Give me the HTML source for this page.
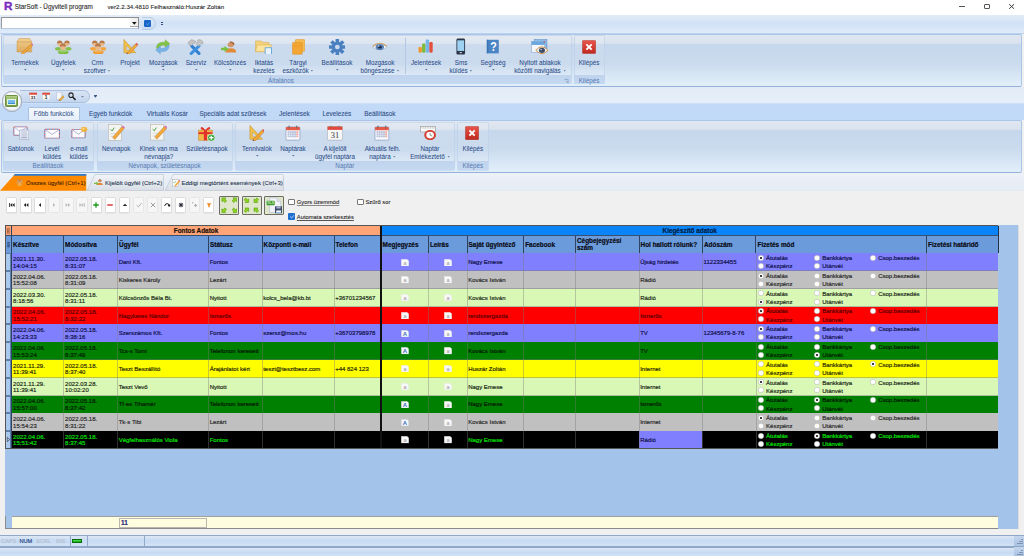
<!DOCTYPE html><html><head><meta charset="utf-8"><style>
*{margin:0;padding:0;box-sizing:border-box}
html,body{width:1024px;height:556px;overflow:hidden;background:#f0f0f0;font-family:"Liberation Sans",sans-serif;position:relative}
.t{position:absolute;white-space:nowrap;-webkit-text-stroke:0.18px currentColor}
.dd{display:inline-block;width:3px;height:2px;margin-left:2px;vertical-align:middle;position:relative;top:-0.6px}
table.g{position:absolute;border-collapse:collapse;table-layout:fixed}
table.g td{padding:0 0 0 1px;overflow:hidden;white-space:nowrap;font-size:6px;line-height:7.5px;vertical-align:middle}
</style></head><body>
<div style="position:absolute;left:0px;top:0px;width:1024px;height:15px;background:#fff"></div>
<div class="t" style="left:4.1px;top:0.4px;font-size:11.6px;line-height:12px;color:#7a2cc0;font-weight:bold;-webkit-text-stroke:0.45px #7a2cc0">R</div>
<div class="t" style="left:14.8px;top:3.0px;font-size:6.35px;line-height:8px;color:#2a2a2a;font-weight:normal;-webkit-text-stroke:0.1px currentColor">StarSoft - Ügyviteli program</div>
<div class="t" style="left:107.5px;top:3.0px;font-size:6.2px;line-height:8px;color:#2a2a2a;font-weight:normal;-webkit-text-stroke:0.1px currentColor">ver2.2.34.4810 Felhasználó:Huszár Zoltán</div>
<div style="position:absolute;left:959.3px;top:6.1px;width:5.7px;height:1px;background:#555"></div>
<div style="position:absolute;left:983.9px;top:3.7px;width:5.7px;height:5.4px;border:1px solid #555;border-radius:1px"></div>
<svg style="position:absolute;left:1008.9px;top:4.1px;overflow:visible" width="5.3" height="5" viewBox="0 0 5.3 5"><path d="M0.2 0.2L5.1 4.8M5.1 0.2L0.2 4.8" stroke="#3a3a3a" stroke-width="1"/></svg>
<div style="position:absolute;left:0px;top:15px;width:1024px;height:18.5px;background:linear-gradient(#e3ecf8,#d2e2f6 40%,#d7e6f8 70%,#e2edfa)"></div>
<div style="position:absolute;left:0px;top:32.5px;width:1024px;height:1px;background:#bad1ee"></div>
<div style="position:absolute;left:1px;top:17.3px;width:137.7px;height:12px;background:#fff;border-top:1px solid #8e8e8e;border-left:1px solid #9a9a9a;border-right:1px solid #8a8a8a;border-bottom:1px solid #b8c8de"></div>
<div style="position:absolute;left:129.8px;top:18.3px;width:8px;height:9.2px;background:linear-gradient(90deg,#f7f7f7,#ececec);border-bottom:1px solid #a8a8a8"></div>
<svg style="position:absolute;left:131.7px;top:22px;overflow:visible" width="4.6" height="3" viewBox="0 0 4.6 3"><path d="M0 0H4.6L2.3 2.7Z" fill="#111"/></svg>
<div style="position:absolute;left:141.5px;top:17px;width:14px;height:13.2px;border-radius:0 7px 7px 0;background:linear-gradient(#dce8f7,#c9dcf2);border:1px solid #b6cbe6;border-left:none"></div>
<div style="position:absolute;left:144px;top:19.9px;width:7px;height:7.1px;background:#1766c9;border-radius:1.2px"></div>
<svg style="position:absolute;left:145.5px;top:21.8px;overflow:visible" width="4" height="3.4" viewBox="0 0 4 3.4"><path d="M0.3 1.8L1.5 2.9L3.7 0.5" stroke="#8fb8ec" stroke-width="0.6" fill="none"/></svg>
<div style="position:absolute;left:160.7px;top:22px;width:2.4px;height:1px;background:#2c4a80"></div>
<div style="position:absolute;left:160.7px;top:24.1px;width:2.4px;height:1px;background:#2c4a80"></div>
<div style="position:absolute;left:1px;top:33.5px;width:1021px;height:53.3px;background:linear-gradient(#e0e7f0,#dae3ef 16%,#c6d7ec 19%,#cbdbee 55%,#e2effb);border:1px solid #a9c6ea;border-bottom:1.6px solid #93b3da;border-radius:2px"></div>
<div style="position:absolute;left:3px;top:35px;width:568.5px;height:49.2px;background:linear-gradient(rgba(255,255,255,0.15),rgba(255,255,255,0.0) 60%,rgba(255,255,255,0.2));border:1px solid rgba(185,207,233,0.6);border-radius:2px"></div>
<div style="position:absolute;left:3.5px;top:75.3px;width:567.5px;height:8.400000000000006px;background:linear-gradient(#bfd3ed,#c5d9f1)"></div>
<div class="t" style="left:281px;top:76.5px;font-size:6.3px;line-height:8px;color:#5679b0;font-weight:normal;transform:translateX(-50%);-webkit-text-stroke:0">Általános</div>
<div style="position:absolute;left:573.5px;top:35px;width:31.5px;height:49.2px;background:linear-gradient(rgba(255,255,255,0.15),rgba(255,255,255,0.0) 60%,rgba(255,255,255,0.2));border:1px solid rgba(185,207,233,0.6);border-radius:2px"></div>
<div style="position:absolute;left:574.0px;top:75.3px;width:30.5px;height:8.400000000000006px;background:linear-gradient(#bfd3ed,#c5d9f1)"></div>
<div class="t" style="left:589px;top:76.5px;font-size:6.3px;line-height:8px;color:#5679b0;font-weight:normal;transform:translateX(-50%);-webkit-text-stroke:0">Kilépés</div>
<div style="position:absolute;left:405px;top:38px;width:0.8px;height:36px;background:#b3c8e3"></div>
<svg style="position:absolute;left:564px;top:78.5px;overflow:visible" width="4.5" height="4.5" viewBox="0 0 4.5 4.5"><path d="M0.4 0.4H4.1V4.1" stroke="#7390b5" stroke-width="0.6" fill="none"/><path d="M1.8 1.8L4 4" stroke="#7390b5" stroke-width="0.6"/></svg>
<svg style="position:absolute;left:16.3px;top:38px" width="16.7" height="16" viewBox="0 0 16 16" preserveAspectRatio="none"><defs><linearGradient id="gbox" x1="0" y1="0" x2="0" y2="1"><stop offset="0" stop-color="#f1cf8f"/><stop offset="1" stop-color="#deaa5c"/></linearGradient></defs>
<path d="M1 3.5L3 0.5H13L15 3.5V14H1Z" fill="url(#gbox)" stroke="#c9964c" stroke-width="0.5"/><path d="M1 4H15" stroke="#c9964c" stroke-width="0.6"/>
<path d="M5 15.5L14.5 6L16 7.5L6.5 17Z" fill="#f4a93a" stroke="#a8691c" stroke-width="0.4"/><path d="M14.5 6L15.3 5.2L16.8 6.7L16 7.5Z" fill="#e06ab0"/></svg>
<div class="t" style="left:25px;top:58.8px;font-size:6.3px;line-height:8px;color:#2a4c88;font-weight:normal;transform:translateX(-50%);-webkit-text-stroke:0.05px currentColor">Termékek</div>
<svg style="position:absolute;left:23.7px;top:68.7px;overflow:visible" width="2.6" height="1.8" viewBox="0 0 2.6 1.8"><path d="M0 0H2.6L1.3 1.5Z" fill="#5a7098"/></svg>
<svg style="position:absolute;left:55px;top:39.5px" width="16.5" height="14.5" viewBox="0 0 16 16" preserveAspectRatio="none"><ellipse cx="3" cy="9.6" rx="3" ry="2" fill="#86c04a"/><ellipse cx="13" cy="9.6" rx="3" ry="2" fill="#86c04a"/><ellipse cx="4.6" cy="4.3999999999999995" rx="2.295" ry="2.5600000000000005" fill="#eab98a"/><path d="M1.8999999999999995 4.1Q1.8999999999999995 0.5999999999999996 4.6 0.5999999999999996Q7.3 0.5999999999999996 7.3 4.1Q4.6 2.6799999999999997 1.8999999999999995 4.1Z" fill="#b97a4c"/><ellipse cx="11.6" cy="4.3999999999999995" rx="2.295" ry="2.5600000000000005" fill="#eab98a"/><path d="M8.899999999999999 4.1Q8.899999999999999 0.5999999999999996 11.6 0.5999999999999996Q14.3 0.5999999999999996 14.3 4.1Q11.6 2.6799999999999997 8.899999999999999 4.1Z" fill="#b97a4c"/><ellipse cx="8" cy="13.6" rx="5.3" ry="2.4" fill="#7cba42"/><ellipse cx="8" cy="12.8" rx="4" ry="1.2" fill="#a8d870" opacity="0.6"/><ellipse cx="7.7" cy="8.0" rx="2.465" ry="3.12" fill="#eab98a"/><path d="M4.800000000000001 7.7Q4.800000000000001 3.5000000000000004 7.7 3.5000000000000004Q10.6 3.5000000000000004 10.6 7.7Q7.7 6.035 4.800000000000001 7.7Z" fill="#b97a4c"/></svg>
<div class="t" style="left:63.3px;top:58.8px;font-size:6.3px;line-height:8px;color:#2a4c88;font-weight:normal;transform:translateX(-50%);-webkit-text-stroke:0.05px currentColor">Ügyfelek</div>
<svg style="position:absolute;left:62.0px;top:68.7px;overflow:visible" width="2.6" height="1.8" viewBox="0 0 2.6 1.8"><path d="M0 0H2.6L1.3 1.5Z" fill="#5a7098"/></svg>
<svg style="position:absolute;left:89.6px;top:39.5px" width="16.60000000000001" height="14.5" viewBox="0 0 16 16" preserveAspectRatio="none"><ellipse cx="3" cy="9.6" rx="3" ry="2" fill="#f2a640"/><ellipse cx="13" cy="9.6" rx="3" ry="2" fill="#f2a640"/><ellipse cx="4.6" cy="4.3999999999999995" rx="2.295" ry="2.5600000000000005" fill="#eab98a"/><path d="M1.8999999999999995 4.1Q1.8999999999999995 0.5999999999999996 4.6 0.5999999999999996Q7.3 0.5999999999999996 7.3 4.1Q4.6 2.6799999999999997 1.8999999999999995 4.1Z" fill="#b97a4c"/><ellipse cx="11.6" cy="4.3999999999999995" rx="2.295" ry="2.5600000000000005" fill="#eab98a"/><path d="M8.899999999999999 4.1Q8.899999999999999 0.5999999999999996 11.6 0.5999999999999996Q14.3 0.5999999999999996 14.3 4.1Q11.6 2.6799999999999997 8.899999999999999 4.1Z" fill="#b97a4c"/><ellipse cx="8" cy="13.6" rx="5.3" ry="2.4" fill="#ee9a2c"/><ellipse cx="8" cy="12.8" rx="4" ry="1.2" fill="#f8c070" opacity="0.6"/><ellipse cx="7.7" cy="8.0" rx="2.465" ry="3.12" fill="#eab98a"/><path d="M4.800000000000001 7.7Q4.800000000000001 3.5000000000000004 7.7 3.5000000000000004Q10.6 3.5000000000000004 10.6 7.7Q7.7 6.035 4.800000000000001 7.7Z" fill="#b97a4c"/></svg>
<div class="t" style="left:97.4px;top:58.8px;font-size:6.3px;line-height:8px;color:#2a4c88;font-weight:normal;transform:translateX(-50%);-webkit-text-stroke:0.05px currentColor">Crm</div>
<div class="t" style="left:97.4px;top:66.8px;font-size:6.3px;line-height:8px;color:#2a4c88;font-weight:normal;transform:translateX(-50%);-webkit-text-stroke:0.05px currentColor">szoftver<svg class="dd" viewBox="0 0 3 2"><path d="M0.2 0.2H2.8L1.5 1.6Z" fill="#5a7098"/></svg></div>
<svg style="position:absolute;left:123.2px;top:39.4px" width="14.600000000000009" height="15.100000000000001" viewBox="0 0 16 16" preserveAspectRatio="none"><path d="M1 0.5L1 14.5L14 14.5Z" fill="#f2c24c" stroke="#c48e26" stroke-width="0.6"/><path d="M3.6 6.8L3.6 11.9L8.6 11.9Z" fill="#c8d8ee" stroke="#c48e26" stroke-width="0.4"/><path d="M3.8 15.6L13.6 5.2L15.6 7.2L5.8 17Z" fill="#f4a83a" stroke="#9a6018" stroke-width="0.4"/><path d="M3.8 15.6L4.6 14.8L5.8 17Z" fill="#444"/><path d="M13.6 5.2L14.8 4L16.8 6L15.6 7.2Z" fill="#e05a5a"/></svg>
<div class="t" style="left:130px;top:58.8px;font-size:6.3px;line-height:8px;color:#2a4c88;font-weight:normal;transform:translateX(-50%);-webkit-text-stroke:0.05px currentColor">Projekt</div>
<svg style="position:absolute;left:155.4px;top:38.9px" width="15.599999999999994" height="15.700000000000003" viewBox="0 0 16 16" preserveAspectRatio="none"><path d="M1.5 9.5Q1.5 3.5 8 3.2L10.5 3.2L10.5 0.8L15.2 4.8L10.5 8.8L10.5 6.3L8 6.3Q4.5 6.5 3.5 9.5Z" fill="#84c444" stroke="#5e9c2a" stroke-width="0.35"/><path d="M14.5 6.5Q14.5 12.5 8 12.8L5.5 12.8L5.5 15.2L0.8 11.2L5.5 7.2L5.5 9.7L8 9.7Q11.5 9.5 12.5 6.5Z" fill="#78b4e8" stroke="#4a88c4" stroke-width="0.35"/></svg>
<div class="t" style="left:163.4px;top:58.8px;font-size:6.3px;line-height:8px;color:#2a4c88;font-weight:normal;transform:translateX(-50%);-webkit-text-stroke:0.05px currentColor">Mozgások</div>
<svg style="position:absolute;left:162.1px;top:68.7px;overflow:visible" width="2.6" height="1.8" viewBox="0 0 2.6 1.8"><path d="M0 0H2.6L1.3 1.5Z" fill="#5a7098"/></svg>
<svg style="position:absolute;left:187px;top:38.5px" width="16.69999999999999" height="16.0" viewBox="0 0 16 16" preserveAspectRatio="none"><path d="M4.5 7L11.5 14.5" stroke="#2f7fd0" stroke-width="3" stroke-linecap="round"/><path d="M11.5 7L4 14.5" stroke="#3b8fe0" stroke-width="3" stroke-linecap="round"/><path d="M0.8 3.5L4.5 0.6L8.2 2.2L7.8 4.2L5.8 4L4.8 6.5L2.5 6.2Z" fill="#c4c4c4" stroke="#8a8a8a" stroke-width="0.4"/><path d="M10.5 0.8Q15.8 0.2 15.3 4.8L13 4.8L12.2 3.2L11.2 4.5L12.5 6.8Q9 7.5 9.2 4Z" fill="#c8c8c8" stroke="#8a8a8a" stroke-width="0.4"/></svg>
<div class="t" style="left:196px;top:58.8px;font-size:6.3px;line-height:8px;color:#2a4c88;font-weight:normal;transform:translateX(-50%);-webkit-text-stroke:0.05px currentColor">Szerviz</div>
<svg style="position:absolute;left:194.7px;top:68.7px;overflow:visible" width="2.6" height="1.8" viewBox="0 0 2.6 1.8"><path d="M0 0H2.6L1.3 1.5Z" fill="#5a7098"/></svg>
<svg style="position:absolute;left:221.2px;top:40.8px" width="15.700000000000017" height="12.200000000000003" viewBox="0 0 16 16" preserveAspectRatio="none"><circle cx="10" cy="5" r="3.2" fill="#d39565"/><path d="M9 1.5Q13 1 13 5" stroke="#9a5a30" stroke-width="1.5" fill="none"/>
<path d="M4.5 15Q4.5 9.5 10 9.5Q15.5 9.5 15.5 15Z" fill="#e28a3a"/><path d="M0 9H3.5V6.5L8 10.5L3.5 14.5V12H0Z" fill="#7cc043"/></svg>
<div class="t" style="left:230px;top:58.8px;font-size:6.3px;line-height:8px;color:#2a4c88;font-weight:normal;transform:translateX(-50%);-webkit-text-stroke:0.05px currentColor">Kölcsönzés</div>
<svg style="position:absolute;left:228.7px;top:68.7px;overflow:visible" width="2.6" height="1.8" viewBox="0 0 2.6 1.8"><path d="M0 0H2.6L1.3 1.5Z" fill="#5a7098"/></svg>
<svg style="position:absolute;left:255.4px;top:38.9px" width="17.099999999999994" height="15.600000000000001" viewBox="0 0 16 16" preserveAspectRatio="none"><path d="M0.5 2H6L7 3.5H13V13H0.5Z" fill="#f3d27a" stroke="#d4a84a" stroke-width="0.5"/><path d="M2 6H15.5L13.5 13H0.5Z" fill="#fbe39b" stroke="#d4a84a" stroke-width="0.5"/>
<rect x="9.5" y="9" width="6" height="7" fill="#e8f2fb" stroke="#5aa0d8" stroke-width="0.8"/></svg>
<div class="t" style="left:264px;top:58.8px;font-size:6.3px;line-height:8px;color:#2a4c88;font-weight:normal;transform:translateX(-50%);-webkit-text-stroke:0.05px currentColor">Iktatás</div>
<div class="t" style="left:264px;top:66.8px;font-size:6.3px;line-height:8px;color:#2a4c88;font-weight:normal;transform:translateX(-50%);-webkit-text-stroke:0.05px currentColor">kezelés</div>
<svg style="position:absolute;left:291.5px;top:38.9px" width="13.199999999999989" height="15.800000000000004" viewBox="0 0 16 16" preserveAspectRatio="none"><rect x="4" y="0.5" width="11.5" height="12" rx="1" fill="#f6bb50" stroke="#d99022" stroke-width="0.5"/><rect x="0.5" y="3.5" width="12" height="12" rx="1" fill="#f4a634" stroke="#d98a1c" stroke-width="0.5"/><path d="M0.5 7H12.5" stroke="#e29326" stroke-width="0.5"/></svg>
<div class="t" style="left:298px;top:58.8px;font-size:6.3px;line-height:8px;color:#2a4c88;font-weight:normal;transform:translateX(-50%);-webkit-text-stroke:0.05px currentColor">Tárgyi</div>
<div class="t" style="left:298px;top:66.8px;font-size:6.3px;line-height:8px;color:#2a4c88;font-weight:normal;transform:translateX(-50%);-webkit-text-stroke:0.05px currentColor">eszközök<svg class="dd" viewBox="0 0 3 2"><path d="M0.2 0.2H2.8L1.5 1.6Z" fill="#5a7098"/></svg></div>
<svg style="position:absolute;left:328.5px;top:38.9px" width="16.69999999999999" height="16.1" viewBox="0 0 16 16" preserveAspectRatio="none"><g fill="#4a7fc0"><circle cx="8" cy="8" r="5.2"/><rect x="6.3" y="0" width="3.4" height="3.8" transform="rotate(0 8 8)"/><rect x="6.3" y="0" width="3.4" height="3.8" transform="rotate(45 8 8)"/><rect x="6.3" y="0" width="3.4" height="3.8" transform="rotate(90 8 8)"/><rect x="6.3" y="0" width="3.4" height="3.8" transform="rotate(135 8 8)"/><rect x="6.3" y="0" width="3.4" height="3.8" transform="rotate(180 8 8)"/><rect x="6.3" y="0" width="3.4" height="3.8" transform="rotate(225 8 8)"/><rect x="6.3" y="0" width="3.4" height="3.8" transform="rotate(270 8 8)"/><rect x="6.3" y="0" width="3.4" height="3.8" transform="rotate(315 8 8)"/></g><circle cx="8" cy="8" r="2.3" fill="#c9d9ee"/></svg>
<div class="t" style="left:337px;top:58.8px;font-size:6.3px;line-height:8px;color:#2a4c88;font-weight:normal;transform:translateX(-50%);-webkit-text-stroke:0.05px currentColor">Beállítások</div>
<svg style="position:absolute;left:335.7px;top:68.7px;overflow:visible" width="2.6" height="1.8" viewBox="0 0 2.6 1.8"><path d="M0 0H2.6L1.3 1.5Z" fill="#5a7098"/></svg>
<svg style="position:absolute;left:372px;top:41.3px" width="15.600000000000023" height="11.300000000000004" viewBox="0 0 16 16" preserveAspectRatio="none"><path d="M0.5 8.5Q8 -0.5 15.5 8.5Q8 17 0.5 8.5Z" fill="#f4f7fb" stroke="#8a9bb8" stroke-width="0.5"/><path d="M1 7.2Q8 -1.2 15 7.2" stroke="#d99a4a" stroke-width="1.3" fill="none"/><circle cx="8" cy="8.5" r="4.4" fill="#5b83b8"/><circle cx="8" cy="8.5" r="2.2" fill="#1d2f50"/><circle cx="6.8" cy="7.2" r="0.9" fill="#fff"/></svg>
<div class="t" style="left:380px;top:58.8px;font-size:6.3px;line-height:8px;color:#2a4c88;font-weight:normal;transform:translateX(-50%);-webkit-text-stroke:0.05px currentColor">Mozgások</div>
<div class="t" style="left:380px;top:66.8px;font-size:6.3px;line-height:8px;color:#2a4c88;font-weight:normal;transform:translateX(-50%);-webkit-text-stroke:0.05px currentColor">böngészése<svg class="dd" viewBox="0 0 3 2"><path d="M0.2 0.2H2.8L1.5 1.6Z" fill="#5a7098"/></svg></div>
<svg style="position:absolute;left:417.8px;top:39.4px" width="15.199999999999989" height="14.100000000000001" viewBox="0 0 16 16" preserveAspectRatio="none"><rect x="0.5" y="9" width="3.6" height="6.5" rx="1.2" fill="#f0982e"/><rect x="4.3" y="5.2" width="3.6" height="10.3" rx="1.2" fill="#7cbc3a"/><rect x="8.1" y="0.5" width="3.6" height="15" rx="1.2" fill="#78b6ea"/><rect x="11.9" y="3.5" width="3.6" height="12" rx="1.2" fill="#e2503e"/></svg>
<div class="t" style="left:426px;top:58.8px;font-size:6.3px;line-height:8px;color:#2a4c88;font-weight:normal;transform:translateX(-50%);-webkit-text-stroke:0.05px currentColor">Jelentések</div>
<svg style="position:absolute;left:424.7px;top:68.7px;overflow:visible" width="2.6" height="1.8" viewBox="0 0 2.6 1.8"><path d="M0 0H2.6L1.3 1.5Z" fill="#5a7098"/></svg>
<svg style="position:absolute;left:454.7px;top:38px" width="11.5" height="17" viewBox="0 0 16 16" preserveAspectRatio="none"><rect x="2" y="0.5" width="12" height="15" rx="1.5" fill="#2a3448"/><rect x="3.2" y="2.2" width="9.6" height="10" fill="#9ed2f2"/><rect x="6.5" y="13.3" width="3" height="1" fill="#ddd"/></svg>
<div class="t" style="left:461px;top:58.8px;font-size:6.3px;line-height:8px;color:#2a4c88;font-weight:normal;transform:translateX(-50%);-webkit-text-stroke:0.05px currentColor">Sms</div>
<div class="t" style="left:461px;top:66.8px;font-size:6.3px;line-height:8px;color:#2a4c88;font-weight:normal;transform:translateX(-50%);-webkit-text-stroke:0.05px currentColor">küldés<svg class="dd" viewBox="0 0 3 2"><path d="M0.2 0.2H2.8L1.5 1.6Z" fill="#5a7098"/></svg></div>
<svg style="position:absolute;left:486.2px;top:38.9px" width="13.199999999999989" height="15.600000000000001" viewBox="0 0 16 16" preserveAspectRatio="none"><rect x="1" y="0.8" width="14.5" height="14" fill="#4a84c4"/><rect x="1" y="0.8" width="1.8" height="14" fill="#3a74b4"/><path d="M1.5 15.2H15.5" stroke="#9fc0e6" stroke-width="0.9"/><text x="9.2" y="12.5" font-family="Liberation Sans" font-weight="bold" font-size="13" fill="#fff" text-anchor="middle">?</text></svg>
<div class="t" style="left:493px;top:58.8px;font-size:6.3px;line-height:8px;color:#2a4c88;font-weight:normal;transform:translateX(-50%);-webkit-text-stroke:0.05px currentColor">Segítség</div>
<svg style="position:absolute;left:491.7px;top:68.7px;overflow:visible" width="2.6" height="1.8" viewBox="0 0 2.6 1.8"><path d="M0 0H2.6L1.3 1.5Z" fill="#5a7098"/></svg>
<svg style="position:absolute;left:531px;top:39.4px" width="17" height="15.100000000000001" viewBox="0 0 16 16" preserveAspectRatio="none"><rect x="3" y="0.5" width="12" height="10" fill="#8cbbe6" stroke="#5a88c0" stroke-width="0.5"/><rect x="0.5" y="2.5" width="12.5" height="11.5" fill="#f4f6fa" stroke="#7a9cc8" stroke-width="0.5"/><rect x="0.5" y="2.5" width="12.5" height="3.8" fill="#6aa6e0"/><circle cx="12.5" cy="3.2" r="0.7" fill="#e04040"/><path d="M4.5 12Q10.3 4.5 16 12Q10.3 19 4.5 12Z" fill="#eef1f6" stroke="#c98a3a" stroke-width="0.9"/><circle cx="10.3" cy="12" r="2.8" fill="#3c4c68"/><circle cx="9.5" cy="11.2" r="0.7" fill="#fff"/></svg>
<div class="t" style="left:540px;top:58.8px;font-size:6.3px;line-height:8px;color:#2a4c88;font-weight:normal;transform:translateX(-50%);-webkit-text-stroke:0.05px currentColor">Nyitott ablakok</div>
<div class="t" style="left:540px;top:66.8px;font-size:6.3px;line-height:8px;color:#2a4c88;font-weight:normal;transform:translateX(-50%);-webkit-text-stroke:0.05px currentColor">közötti navigálás<svg class="dd" viewBox="0 0 3 2"><path d="M0.2 0.2H2.8L1.5 1.6Z" fill="#5a7098"/></svg></div>
<svg style="position:absolute;left:582px;top:40px" width="14.100000000000023" height="14" viewBox="0 0 16 16" preserveAspectRatio="none"><defs><linearGradient id="gex" x1="0" y1="0" x2="0" y2="1"><stop offset="0" stop-color="#e8554a"/><stop offset="1" stop-color="#c0281e"/></linearGradient></defs><rect x="0.5" y="0.5" width="15" height="15" rx="1" fill="url(#gex)" stroke="#a8261c" stroke-width="0.5"/>
<path d="M5 5L11 11M11 5L5 11" stroke="#fff" stroke-width="2.2"/></svg>
<div class="t" style="left:589px;top:58.8px;font-size:6.3px;line-height:8px;color:#2a4c88;font-weight:normal;transform:translateX(-50%);-webkit-text-stroke:0.05px currentColor">Kilépés</div>
<div style="position:absolute;left:0px;top:86.8px;width:1024px;height:33.2px;background:linear-gradient(#e2ebf7 0px,#e6eef9 16px,#c2daf7 16.7px,#c0d9f7 33px)"></div>
<div style="position:absolute;left:19.5px;top:90px;width:70px;height:12.6px;border-radius:0 7px 7px 0;background:linear-gradient(#d8e4f4,#c4d6ee);border:1px solid #a9c0de;border-left:none"></div>
<div style="position:absolute;left:1.8px;top:91.2px;width:20.4px;height:20.4px;border-radius:50%;background:radial-gradient(circle at 50% 45%,#ffffff 0%,#f4f6f9 60%,#d0d6de 80%,#eef1f5 100%);border:0.8px solid #a4aebb;box-shadow:0 0 0.6px #8a96a8"></div>
<div style="position:absolute;left:4.9px;top:95px;width:13.3px;height:11.7px;background:linear-gradient(#b4d08c,#8cb45a 40%,#76a048);border-radius:1.2px;border:0.5px solid #6a9040"></div>
<div style="position:absolute;left:6.6px;top:99.2px;width:9.6px;height:5.6px;background:linear-gradient(#8cc8f4,#5aaae8 35%,#e8f4fc 50%,#5aaae8 65%,#2e7cc4);border:0.5px solid #e8f2e0"></div>
<svg style="position:absolute;left:28.8px;top:92.3px" width="8.3" height="8.2" viewBox="0 0 16 16" preserveAspectRatio="none"><rect x="0.5" y="1.5" width="15" height="14" rx="0.8" fill="#f8f8f8" stroke="#8a94b0" stroke-width="0.8"/><rect x="0.5" y="1.5" width="15" height="3.8" fill="#e0483c"/><text x="8" y="14" font-family="Liberation Sans" font-weight="bold" font-size="8.5" fill="#222" text-anchor="middle">31</text></svg>
<svg style="position:absolute;left:42px;top:92.3px" width="8.3" height="8.2" viewBox="0 0 16 16" preserveAspectRatio="none"><rect x="0.5" y="1.5" width="15" height="14" rx="0.8" fill="#f8f8f8" stroke="#9aa0a8" stroke-width="0.6"/><rect x="0.5" y="1.5" width="15" height="3.8" fill="#e0483c"/><text x="8" y="14" font-family="Liberation Sans" font-weight="bold" font-size="9" fill="#222" text-anchor="middle">1</text></svg>
<svg style="position:absolute;left:55.5px;top:92px" width="8.5" height="8.8" viewBox="0 0 16 16" preserveAspectRatio="none"><path d="M1 0.5H11V10L6 14H1Z" fill="#f4f6fa" stroke="#98a4c0" stroke-width="0.7"/><path d="M5 15L13 6.5L15.5 9L7.5 17Z" fill="#f0b040" stroke="#8a5a1a" stroke-width="0.5"/><path d="M5 15L6 14.5L7.5 17Z" fill="#333"/></svg>
<svg style="position:absolute;left:68px;top:92.3px" width="8" height="8.5" viewBox="0 0 16 16" preserveAspectRatio="none"><circle cx="6" cy="6" r="4.3" fill="none" stroke="#222" stroke-width="2"/><path d="M9 9L15 15" stroke="#222" stroke-width="3"/></svg>
<svg style="position:absolute;left:80.5px;top:96px;overflow:visible" width="3" height="2" viewBox="0 0 3 2"><path d="M0 0H3L1.5 1.7Z" fill="#7a8aa4"/></svg>
<div style="position:absolute;left:93.8px;top:94.8px;width:2.8px;height:0.7px;background:#3b5a8a"></div>
<svg style="position:absolute;left:93.8px;top:96.2px;overflow:visible" width="2.8" height="2" viewBox="0 0 2.8 2"><path d="M0 0H2.8L1.4 1.8Z" fill="#3b5a8a"/></svg>
<div style="position:absolute;left:27.8px;top:106.8px;width:52.5px;height:13.5px;background:linear-gradient(#f4f8fd,#e7eff9);border:1px solid #a9c2e2;border-bottom:none;border-radius:2px 2px 0 0"></div>
<div class="t" style="left:53.7px;top:109.6px;font-size:6.4px;line-height:8px;color:#33528a;font-weight:normal;transform:translateX(-50%);-webkit-text-stroke:0.05px currentColor">Főbb funkciók</div>
<div class="t" style="left:110.6px;top:109.6px;font-size:6.4px;line-height:8px;color:#2e4c86;font-weight:normal;transform:translateX(-50%);-webkit-text-stroke:0.08px currentColor">Egyéb funkciók</div>
<div class="t" style="left:167.3px;top:109.6px;font-size:6.4px;line-height:8px;color:#2e4c86;font-weight:normal;transform:translateX(-50%);-webkit-text-stroke:0.08px currentColor">Virtuális Kosár</div>
<div class="t" style="left:233px;top:109.6px;font-size:6.4px;line-height:8px;color:#2e4c86;font-weight:normal;transform:translateX(-50%);-webkit-text-stroke:0.08px currentColor">Speciális adat szűrések</div>
<div class="t" style="left:294.4px;top:109.6px;font-size:6.4px;line-height:8px;color:#2e4c86;font-weight:normal;transform:translateX(-50%);-webkit-text-stroke:0.08px currentColor">Jelentések</div>
<div class="t" style="left:336.8px;top:109.6px;font-size:6.4px;line-height:8px;color:#2e4c86;font-weight:normal;transform:translateX(-50%);-webkit-text-stroke:0.08px currentColor">Levelezés</div>
<div class="t" style="left:379.8px;top:109.6px;font-size:6.4px;line-height:8px;color:#2e4c86;font-weight:normal;transform:translateX(-50%);-webkit-text-stroke:0.08px currentColor">Beállítások</div>
<div style="position:absolute;left:1px;top:119.7px;width:1021px;height:53.39999999999999px;background:linear-gradient(#e0e7f0,#dae3ef 16%,#c6d7ec 19%,#cbdbee 55%,#e2effb);border:1px solid #a9c6ea;border-bottom:1.6px solid #93b3da;border-radius:2px"></div>
<div style="position:absolute;left:2.5px;top:121.5px;width:91.5px;height:49.099999999999994px;background:linear-gradient(rgba(255,255,255,0.15),rgba(255,255,255,0.0) 60%,rgba(255,255,255,0.2));border:1px solid rgba(185,207,233,0.6);border-radius:2px"></div>
<div style="position:absolute;left:3.0px;top:161.2px;width:90.5px;height:8.900000000000006px;background:linear-gradient(#bfd3ed,#c5d9f1)"></div>
<div class="t" style="left:48px;top:162.0px;font-size:6.3px;line-height:8px;color:#5679b0;font-weight:normal;transform:translateX(-50%);-webkit-text-stroke:0">Beállítások</div>
<div style="position:absolute;left:96.5px;top:121.5px;width:136.3px;height:49.099999999999994px;background:linear-gradient(rgba(255,255,255,0.15),rgba(255,255,255,0.0) 60%,rgba(255,255,255,0.2));border:1px solid rgba(185,207,233,0.6);border-radius:2px"></div>
<div style="position:absolute;left:97.0px;top:161.2px;width:135.3px;height:8.900000000000006px;background:linear-gradient(#bfd3ed,#c5d9f1)"></div>
<div class="t" style="left:164.6px;top:162.0px;font-size:6.3px;line-height:8px;color:#5679b0;font-weight:normal;transform:translateX(-50%);-webkit-text-stroke:0">Névnapok, születésnapok</div>
<div style="position:absolute;left:234.5px;top:121.5px;width:220.7px;height:49.099999999999994px;background:linear-gradient(rgba(255,255,255,0.15),rgba(255,255,255,0.0) 60%,rgba(255,255,255,0.2));border:1px solid rgba(185,207,233,0.6);border-radius:2px"></div>
<div style="position:absolute;left:235.0px;top:161.2px;width:219.7px;height:8.900000000000006px;background:linear-gradient(#bfd3ed,#c5d9f1)"></div>
<div class="t" style="left:344.8px;top:162.0px;font-size:6.3px;line-height:8px;color:#5679b0;font-weight:normal;transform:translateX(-50%);-webkit-text-stroke:0">Naptár</div>
<div style="position:absolute;left:457px;top:121.5px;width:31.69999999999999px;height:49.099999999999994px;background:linear-gradient(rgba(255,255,255,0.15),rgba(255,255,255,0.0) 60%,rgba(255,255,255,0.2));border:1px solid rgba(185,207,233,0.6);border-radius:2px"></div>
<div style="position:absolute;left:457.5px;top:161.2px;width:30.69999999999999px;height:8.900000000000006px;background:linear-gradient(#bfd3ed,#c5d9f1)"></div>
<div class="t" style="left:472.8px;top:162.0px;font-size:6.3px;line-height:8px;color:#5679b0;font-weight:normal;transform:translateX(-50%);-webkit-text-stroke:0">Kilépés</div>
<svg style="position:absolute;left:12.6px;top:126.4px" width="16.4" height="14.099999999999994" viewBox="0 0 16 16" preserveAspectRatio="none"><rect x="0.8" y="1" width="13" height="9.5" rx="0.5" fill="#fbfbfd" stroke="#d85a5a" stroke-width="1" stroke-dasharray="1.5 1.5"/><rect x="0.8" y="1" width="13" height="9.5" rx="0.5" fill="none" stroke="#5a7ec8" stroke-width="1" stroke-dasharray="1.5 1.5" stroke-dashoffset="1.5"/><path d="M1.5 1.5L7 6.5L13 1.5" stroke="#8a92b8" stroke-width="0.6" fill="none"/><rect x="6.5" y="4.5" width="9" height="11" rx="0.6" fill="#f0f2f8" stroke="#9aa6c8" stroke-width="0.8"/><rect x="8" y="6.3" width="6" height="1" fill="#a8b2cc"/><rect x="8" y="8.2" width="6" height="3" fill="#c8d0e2"/><rect x="8" y="12" width="6" height="2" fill="#a8b2cc"/></svg>
<div class="t" style="left:20.8px;top:144.8px;font-size:6.3px;line-height:8px;color:#2a4c88;font-weight:normal;transform:translateX(-50%);-webkit-text-stroke:0.05px currentColor">Sablonok</div>
<svg style="position:absolute;left:43.7px;top:126.5px" width="16.299999999999997" height="13.300000000000011" viewBox="0 0 16 16" preserveAspectRatio="none"><rect x="0.8" y="2.8" width="14.4" height="10.6" rx="0.6" fill="#fbfbfd" stroke="#d85a5a" stroke-width="1.1" stroke-dasharray="1.6 1.6"/><rect x="0.8" y="2.8" width="14.4" height="10.6" rx="0.6" fill="none" stroke="#5a7ec8" stroke-width="1.1" stroke-dasharray="1.6 1.6" stroke-dashoffset="1.6"/><path d="M1.5 3.5L8 9L14.5 3.5" stroke="#8a92b8" stroke-width="0.7" fill="none"/></svg>
<div class="t" style="left:52px;top:144.8px;font-size:6.3px;line-height:8px;color:#2a4c88;font-weight:normal;transform:translateX(-50%);-webkit-text-stroke:0.05px currentColor">Levél</div>
<div class="t" style="left:52px;top:152.8px;font-size:6.3px;line-height:8px;color:#2a4c88;font-weight:normal;transform:translateX(-50%);-webkit-text-stroke:0.05px currentColor">küldés</div>
<svg style="position:absolute;left:70.6px;top:125.9px" width="17.0" height="13.099999999999994" viewBox="0 0 16 16" preserveAspectRatio="none"><rect x="0.8" y="4.5" width="12.5" height="10" rx="0.6" fill="#fbfbfd" stroke="#d85a5a" stroke-width="1" stroke-dasharray="1.5 1.5"/><rect x="0.8" y="4.5" width="12.5" height="10" rx="0.6" fill="none" stroke="#5a7ec8" stroke-width="1" stroke-dasharray="1.5 1.5" stroke-dashoffset="1.5"/><path d="M1.5 5L7 10L12.5 5" stroke="#8a92b8" stroke-width="0.7" fill="none"/><g transform="translate(12.3 4.2)"><path d="M0 -4L1 -1.5L-1 -1.5Z" fill="#f0a830" transform="rotate(0)"/><path d="M0 -4L1 -1.5L-1 -1.5Z" fill="#f0a830" transform="rotate(45)"/><path d="M0 -4L1 -1.5L-1 -1.5Z" fill="#f0a830" transform="rotate(90)"/><path d="M0 -4L1 -1.5L-1 -1.5Z" fill="#f0a830" transform="rotate(135)"/><path d="M0 -4L1 -1.5L-1 -1.5Z" fill="#f0a830" transform="rotate(180)"/><path d="M0 -4L1 -1.5L-1 -1.5Z" fill="#f0a830" transform="rotate(225)"/><path d="M0 -4L1 -1.5L-1 -1.5Z" fill="#f0a830" transform="rotate(270)"/><path d="M0 -4L1 -1.5L-1 -1.5Z" fill="#f0a830" transform="rotate(315)"/><circle r="2.6" fill="#f2b23a"/><circle cx="-0.6" cy="-0.7" r="1.2" fill="#f8d890"/></g></svg>
<div class="t" style="left:78.8px;top:144.8px;font-size:6.3px;line-height:8px;color:#2a4c88;font-weight:normal;transform:translateX(-50%);-webkit-text-stroke:0.05px currentColor">e-mail</div>
<div class="t" style="left:78.8px;top:152.8px;font-size:6.3px;line-height:8px;color:#2a4c88;font-weight:normal;transform:translateX(-50%);-webkit-text-stroke:0.05px currentColor">küldés</div>
<svg style="position:absolute;left:108px;top:124px" width="16.5" height="17" viewBox="0 0 16 16" preserveAspectRatio="none"><rect x="0.5" y="0.5" width="12.5" height="15" fill="#f4f4f0" stroke="#b8b8b0" stroke-width="0.6"/><path d="M2.5 5L4 6.5L6 3.5" stroke="#3a9a3a" stroke-width="0.9" fill="none"/><path d="M2.5 9H8M2.5 11.5H8" stroke="#bbb" stroke-width="0.5"/>
<path d="M4.5 12.5L13.5 2.5L15.5 4.5L6.5 14.5Z" fill="#f4a93a" stroke="#a8691c" stroke-width="0.4"/><path d="M13.5 2.5L14.5 1.5L16.5 3.5L15.5 4.5Z" fill="#e06ab0"/></svg>
<div class="t" style="left:116.2px;top:144.8px;font-size:6.3px;line-height:8px;color:#2a4c88;font-weight:normal;transform:translateX(-50%);-webkit-text-stroke:0.05px currentColor">Névnapok</div>
<svg style="position:absolute;left:150.2px;top:124px" width="17.0" height="16.599999999999994" viewBox="0 0 16 16" preserveAspectRatio="none"><rect x="0.5" y="0.5" width="12.5" height="15" fill="#f4f4f0" stroke="#b8b8b0" stroke-width="0.6"/><path d="M2.5 5L4 6.5L6 3.5" stroke="#3a9a3a" stroke-width="0.9" fill="none"/><path d="M2.5 9H8M2.5 11.5H8" stroke="#bbb" stroke-width="0.5"/>
<path d="M4.5 12.5L13.5 2.5L15.5 4.5L6.5 14.5Z" fill="#f4a93a" stroke="#a8691c" stroke-width="0.4"/><path d="M13.5 2.5L14.5 1.5L16.5 3.5L15.5 4.5Z" fill="#e06ab0"/></svg>
<div class="t" style="left:158.8px;top:144.8px;font-size:6.3px;line-height:8px;color:#2a4c88;font-weight:normal;transform:translateX(-50%);-webkit-text-stroke:0.05px currentColor">Kinek van ma</div>
<div class="t" style="left:158.8px;top:152.8px;font-size:6.3px;line-height:8px;color:#2a4c88;font-weight:normal;transform:translateX(-50%);-webkit-text-stroke:0.05px currentColor">névnapja?</div>
<svg style="position:absolute;left:198.2px;top:124.7px" width="17.0" height="16.299999999999997" viewBox="0 0 16 16" preserveAspectRatio="none"><rect x="0.5" y="5" width="13" height="10" fill="#f2b84a" stroke="#c98a2a" stroke-width="0.5"/><rect x="5.5" y="5" width="3" height="10" fill="#e2342a"/><rect x="0.5" y="7" width="13" height="2" fill="#e2342a"/>
<path d="M7 5Q3 0 2.5 3.5Q3 5 7 5Q11 0 11.5 3.5Q11 5 7 5" fill="#e2342a"/><circle cx="12.5" cy="12.5" r="3.5" fill="#3aa53a" stroke="#fff" stroke-width="0.6"/><path d="M12.5 10.5V14.5M10.5 12.5H14.5" stroke="#fff" stroke-width="1.2"/></svg>
<div class="t" style="left:207px;top:144.8px;font-size:6.3px;line-height:8px;color:#2a4c88;font-weight:normal;transform:translateX(-50%);-webkit-text-stroke:0.05px currentColor">Születésnapok</div>
<svg style="position:absolute;left:249px;top:125.3px" width="15.300000000000011" height="15.700000000000003" viewBox="0 0 16 16" preserveAspectRatio="none"><path d="M1 0.5L1 14.5L14 14.5Z" fill="#f2c24c" stroke="#c48e26" stroke-width="0.6"/><path d="M3.6 6.8L3.6 11.9L8.6 11.9Z" fill="#c8d8ee" stroke="#c48e26" stroke-width="0.4"/><path d="M3.8 15.6L13.6 5.2L15.6 7.2L5.8 17Z" fill="#f4a83a" stroke="#9a6018" stroke-width="0.4"/><path d="M3.8 15.6L4.6 14.8L5.8 17Z" fill="#444"/><path d="M13.6 5.2L14.8 4L16.8 6L15.6 7.2Z" fill="#e05a5a"/></svg>
<div class="t" style="left:257px;top:144.8px;font-size:6.3px;line-height:8px;color:#2a4c88;font-weight:normal;transform:translateX(-50%);-webkit-text-stroke:0.05px currentColor">Tennivalók</div>
<svg style="position:absolute;left:255.7px;top:154.70000000000002px;overflow:visible" width="2.6" height="1.8" viewBox="0 0 2.6 1.8"><path d="M0 0H2.6L1.3 1.5Z" fill="#5a7098"/></svg>
<svg style="position:absolute;left:284.8px;top:125.3px" width="15.899999999999977" height="15.600000000000009" viewBox="0 0 16 16" preserveAspectRatio="none"><rect x="1" y="2" width="14" height="13.5" rx="0.8" fill="#fafbfd" stroke="#8a98c0" stroke-width="0.7"/><rect x="1" y="2" width="14" height="3.4" rx="0.8" fill="#e65a48"/><rect x="3.6" y="0.6" width="1" height="3" fill="#666"/><rect x="11.4" y="0.6" width="1" height="3" fill="#666"/><rect x="2.60" y="6.30" width="1.9" height="1.9" fill="#b8c2dc"/><rect x="2.60" y="8.50" width="1.9" height="1.9" fill="#b8c2dc"/><rect x="2.60" y="10.70" width="1.9" height="1.9" fill="#b8c2dc"/><rect x="4.80" y="6.30" width="1.9" height="1.9" fill="#b8c2dc"/><rect x="4.80" y="8.50" width="1.9" height="1.9" fill="#b8c2dc"/><rect x="4.80" y="10.70" width="1.9" height="1.9" fill="#b8c2dc"/><rect x="7.00" y="6.30" width="1.9" height="1.9" fill="#b8c2dc"/><rect x="7.00" y="8.50" width="1.9" height="1.9" fill="#b8c2dc"/><rect x="7.00" y="10.70" width="1.9" height="1.9" fill="#b8c2dc"/><rect x="9.20" y="6.30" width="1.9" height="1.9" fill="#b8c2dc"/><rect x="9.20" y="8.50" width="1.9" height="1.9" fill="#b8c2dc"/><rect x="9.20" y="10.70" width="1.9" height="1.9" fill="#b8c2dc"/><rect x="11.40" y="6.30" width="1.9" height="1.9" fill="#f0a8a0"/><rect x="11.40" y="8.50" width="1.9" height="1.9" fill="#f0a8a0"/><rect x="11.40" y="10.70" width="1.9" height="1.9" fill="#f0a8a0"/></svg>
<div class="t" style="left:293px;top:144.8px;font-size:6.3px;line-height:8px;color:#2a4c88;font-weight:normal;transform:translateX(-50%);-webkit-text-stroke:0.05px currentColor">Naptárak</div>
<svg style="position:absolute;left:291.7px;top:154.70000000000002px;overflow:visible" width="2.6" height="1.8" viewBox="0 0 2.6 1.8"><path d="M0 0H2.6L1.3 1.5Z" fill="#5a7098"/></svg>
<svg style="position:absolute;left:327px;top:125.3px" width="15.899999999999977" height="15.600000000000009" viewBox="0 0 16 16" preserveAspectRatio="none"><rect x="0.5" y="1.5" width="15" height="14" rx="0.8" fill="#f8f8f8" stroke="#9aa0a8" stroke-width="0.5"/><rect x="0.5" y="1.5" width="15" height="3.5" fill="#e0483c"/><circle cx="4" cy="1.5" r="0.8" fill="#777"/><circle cx="12" cy="1.5" r="0.8" fill="#777"/>
<text x="8" y="13.5" font-family="Liberation Serif" font-size="8.5" fill="#333" text-anchor="middle">31</text></svg>
<div class="t" style="left:335px;top:144.8px;font-size:6.3px;line-height:8px;color:#2a4c88;font-weight:normal;transform:translateX(-50%);-webkit-text-stroke:0.05px currentColor">A kijelölt</div>
<div class="t" style="left:335px;top:152.8px;font-size:6.3px;line-height:8px;color:#2a4c88;font-weight:normal;transform:translateX(-50%);-webkit-text-stroke:0.05px currentColor">ügyfél naptára</div>
<svg style="position:absolute;left:374.4px;top:125.3px" width="15.800000000000011" height="15.600000000000009" viewBox="0 0 16 16" preserveAspectRatio="none"><rect x="1" y="2" width="14" height="13.5" rx="0.8" fill="#fafbfd" stroke="#8a98c0" stroke-width="0.7"/><rect x="1" y="2" width="14" height="3.4" rx="0.8" fill="#e65a48"/><rect x="3.6" y="0.6" width="1" height="3" fill="#666"/><rect x="11.4" y="0.6" width="1" height="3" fill="#666"/><rect x="2.60" y="6.30" width="1.9" height="1.9" fill="#b8c2dc"/><rect x="2.60" y="8.50" width="1.9" height="1.9" fill="#b8c2dc"/><rect x="2.60" y="10.70" width="1.9" height="1.9" fill="#b8c2dc"/><rect x="4.80" y="6.30" width="1.9" height="1.9" fill="#b8c2dc"/><rect x="4.80" y="8.50" width="1.9" height="1.9" fill="#b8c2dc"/><rect x="4.80" y="10.70" width="1.9" height="1.9" fill="#b8c2dc"/><rect x="7.00" y="6.30" width="1.9" height="1.9" fill="#b8c2dc"/><rect x="7.00" y="8.50" width="1.9" height="1.9" fill="#b8c2dc"/><rect x="7.00" y="10.70" width="1.9" height="1.9" fill="#b8c2dc"/><rect x="9.20" y="6.30" width="1.9" height="1.9" fill="#b8c2dc"/><rect x="9.20" y="8.50" width="1.9" height="1.9" fill="#b8c2dc"/><rect x="9.20" y="10.70" width="1.9" height="1.9" fill="#b8c2dc"/><rect x="11.40" y="6.30" width="1.9" height="1.9" fill="#f0a8a0"/><rect x="11.40" y="8.50" width="1.9" height="1.9" fill="#f0a8a0"/><rect x="11.40" y="10.70" width="1.9" height="1.9" fill="#f0a8a0"/></svg>
<div class="t" style="left:382.5px;top:144.8px;font-size:6.3px;line-height:8px;color:#2a4c88;font-weight:normal;transform:translateX(-50%);-webkit-text-stroke:0.05px currentColor">Aktuális felh.</div>
<div class="t" style="left:382.5px;top:152.8px;font-size:6.3px;line-height:8px;color:#2a4c88;font-weight:normal;transform:translateX(-50%);-webkit-text-stroke:0.05px currentColor">naptára<svg class="dd" viewBox="0 0 3 2"><path d="M0.2 0.2H2.8L1.5 1.6Z" fill="#5a7098"/></svg></div>
<svg style="position:absolute;left:420px;top:125.9px" width="17" height="14.599999999999994" viewBox="0 0 16 16" preserveAspectRatio="none"><rect x="0.5" y="0.5" width="14" height="6" fill="#fafafa" stroke="#888" stroke-width="0.5"/><path d="M2.0 0.5V3" stroke="#666" stroke-width="0.3"/><path d="M3.6 0.5V3" stroke="#666" stroke-width="0.3"/><path d="M5.2 0.5V3" stroke="#666" stroke-width="0.3"/><path d="M6.800000000000001 0.5V3" stroke="#666" stroke-width="0.3"/><path d="M8.4 0.5V3" stroke="#666" stroke-width="0.3"/><path d="M10.0 0.5V3" stroke="#666" stroke-width="0.3"/><path d="M11.600000000000001 0.5V3" stroke="#666" stroke-width="0.3"/><path d="M13.200000000000001 0.5V3" stroke="#666" stroke-width="0.3"/>
<circle cx="9.5" cy="10" r="5.5" fill="#d43c30"/><circle cx="9.5" cy="10" r="3.6" fill="#fff"/><path d="M9.5 10V7.5M9.5 10L11.5 11" stroke="#444" stroke-width="0.6"/></svg>
<div class="t" style="left:430px;top:144.8px;font-size:6.3px;line-height:8px;color:#2a4c88;font-weight:normal;transform:translateX(-50%);-webkit-text-stroke:0.05px currentColor">Naptár</div>
<div class="t" style="left:430px;top:152.8px;font-size:6.3px;line-height:8px;color:#2a4c88;font-weight:normal;transform:translateX(-50%);-webkit-text-stroke:0.05px currentColor">Emlékeztető<svg class="dd" viewBox="0 0 3 2"><path d="M0.2 0.2H2.8L1.5 1.6Z" fill="#5a7098"/></svg></div>
<svg style="position:absolute;left:465.2px;top:125.9px" width="14.100000000000023" height="14.099999999999994" viewBox="0 0 16 16" preserveAspectRatio="none"><defs><linearGradient id="gex" x1="0" y1="0" x2="0" y2="1"><stop offset="0" stop-color="#e8554a"/><stop offset="1" stop-color="#c0281e"/></linearGradient></defs><rect x="0.5" y="0.5" width="15" height="15" rx="1" fill="url(#gex)" stroke="#a8261c" stroke-width="0.5"/>
<path d="M5 5L11 11M11 5L5 11" stroke="#fff" stroke-width="2.2"/></svg>
<div class="t" style="left:472.8px;top:144.8px;font-size:6.3px;line-height:8px;color:#2a4c88;font-weight:normal;transform:translateX(-50%);-webkit-text-stroke:0.05px currentColor">Kilépés</div>
<div style="position:absolute;left:0px;top:173.1px;width:1024px;height:17.6px;background:linear-gradient(#edf2f9,#e4eaf3)"></div>
<svg style="position:absolute;left:165px;top:174px;overflow:visible" width="125" height="16.7" viewBox="0 0 125 16.7"><defs><linearGradient id="tg" x1="0" y1="0" x2="0" y2="1"><stop offset="0" stop-color="#f1f4f8"/><stop offset="1" stop-color="#d9dee6"/></linearGradient></defs><path d="M0 16.7L8 0.5H117.5Q118.5 0.5 118.5 1.5V16.7Z" fill="url(#tg)" stroke="#b7bfca" stroke-width="0.6"/></svg>
<svg style="position:absolute;left:87px;top:174px;overflow:visible" width="77" height="16.7" viewBox="0 0 77 16.7"><path d="M0 16.7L8 0.5H76.5V16.7Z" fill="url(#tg)" stroke="#b7bfca" stroke-width="0.6"/></svg>
<svg style="position:absolute;left:0px;top:174px;overflow:visible" width="86.3" height="16.7" viewBox="0 0 86.3 16.7"><path d="M0 16.7L15 0H86.3V16.7Z" fill="#ff8a00"/><path d="M15 0H86.3V1.8H13.4Z" fill="#2b7bd0"/></svg>
<div class="t" style="left:26px;top:179.0px;font-size:6.0px;line-height:8px;color:#3a2000;font-weight:normal;-webkit-text-stroke:0.08px currentColor">Összes ügyfél (Ctrl+1)</div>
<svg style="position:absolute;left:16.2px;top:178.9px" width="7.4" height="7.1" viewBox="0 0 16 16" preserveAspectRatio="none"><ellipse cx="3" cy="9.6" rx="3" ry="2" fill="#e09838"/><ellipse cx="13" cy="9.6" rx="3" ry="2" fill="#e09838"/><ellipse cx="4.6" cy="4.3999999999999995" rx="2.295" ry="2.5600000000000005" fill="#eab98a"/><path d="M1.8999999999999995 4.1Q1.8999999999999995 0.5999999999999996 4.6 0.5999999999999996Q7.3 0.5999999999999996 7.3 4.1Q4.6 2.6799999999999997 1.8999999999999995 4.1Z" fill="#b97a4c"/><ellipse cx="11.6" cy="4.3999999999999995" rx="2.295" ry="2.5600000000000005" fill="#eab98a"/><path d="M8.899999999999999 4.1Q8.899999999999999 0.5999999999999996 11.6 0.5999999999999996Q14.3 0.5999999999999996 14.3 4.1Q11.6 2.6799999999999997 8.899999999999999 4.1Z" fill="#b97a4c"/><ellipse cx="8" cy="13.6" rx="5.3" ry="2.4" fill="#eaa440"/><ellipse cx="8" cy="12.8" rx="4" ry="1.2" fill="#f4c878" opacity="0.6"/><ellipse cx="7.7" cy="8.0" rx="2.465" ry="3.12" fill="#eab98a"/><path d="M4.800000000000001 7.7Q4.800000000000001 3.5000000000000004 7.7 3.5000000000000004Q10.6 3.5000000000000004 10.6 7.7Q7.7 6.035 4.800000000000001 7.7Z" fill="#b97a4c"/></svg>
<div class="t" style="left:105px;top:179.0px;font-size:6.0px;line-height:8px;color:#20304a;font-weight:normal;-webkit-text-stroke:0.08px currentColor">Kijelölt ügyfél (Ctrl+2)</div>
<svg style="position:absolute;left:94.2px;top:178.9px" width="9.1" height="6.5" viewBox="0 0 16 16" preserveAspectRatio="none"><circle cx="10" cy="5" r="3.2" fill="#d39565"/><path d="M9 1.5Q13 1 13 5" stroke="#9a5a30" stroke-width="1.5" fill="none"/>
<path d="M4.5 15Q4.5 9.5 10 9.5Q15.5 9.5 15.5 15Z" fill="#e28a3a"/><path d="M0 9H3.5V6.5L8 10.5L3.5 14.5V12H0Z" fill="#7cc043"/></svg>
<div class="t" style="left:181.5px;top:179.0px;font-size:6.0px;line-height:8px;color:#20304a;font-weight:normal;-webkit-text-stroke:0.08px currentColor">Eddigi megtörtént események (Ctrl+3)</div>
<svg style="position:absolute;left:172px;top:178.5px" width="8" height="8" viewBox="0 0 16 16" preserveAspectRatio="none"><rect x="1" y="1" width="12" height="14" fill="#fafafa" stroke="#999" stroke-width="0.8"/><path d="M3 6L5 8L8 4" stroke="#3a3" fill="none"/><path d="M5 13L14 3L16 5L7 15Z" fill="#f0a030"/><circle cx="15" cy="3" r="1.5" fill="#d6a"/></svg>
<div style="position:absolute;left:0px;top:190.7px;width:1024px;height:34.5px;background:#f0f0f0"></div>
<div style="position:absolute;left:5.7px;top:197px;width:11.8px;height:16px;background:#fff;border:0.6px solid #dcdcdc;border-radius:1.5px;box-shadow:0 0.5px 0.5px rgba(0,0,0,0.08)"></div>
<svg style="position:absolute;left:8.6px;top:202px;overflow:visible" width="6" height="6" viewBox="0 0 6 6"><path d="M0.6 1V5" stroke="#222" stroke-width="0.9"/><path d="M3.3 1L1.2 3L3.3 5Z M5.6 1L3.5 3L5.6 5Z" fill="#222"/></svg>
<div style="position:absolute;left:19.9px;top:197px;width:11.8px;height:16px;background:#fff;border:0.6px solid #dcdcdc;border-radius:1.5px;box-shadow:0 0.5px 0.5px rgba(0,0,0,0.08)"></div>
<svg style="position:absolute;left:22.799999999999997px;top:202px;overflow:visible" width="6" height="6" viewBox="0 0 6 6"><path d="M3 1L0.8 3L3 5Z M5.4 1L3.2 3L5.4 5Z" fill="#222"/></svg>
<div style="position:absolute;left:34px;top:197px;width:11.8px;height:16px;background:#fff;border:0.6px solid #dcdcdc;border-radius:1.5px;box-shadow:0 0.5px 0.5px rgba(0,0,0,0.08)"></div>
<svg style="position:absolute;left:36.9px;top:202px;overflow:visible" width="6" height="6" viewBox="0 0 6 6"><path d="M4 1L1.8 3L4 5Z" fill="#222"/></svg>
<div style="position:absolute;left:48.1px;top:197px;width:11.8px;height:16px;background:#f6f6f6;border:0.6px solid #e6e6e6;border-radius:1.5px"></div>
<svg style="position:absolute;left:51.0px;top:202px;overflow:visible" width="6" height="6" viewBox="0 0 6 6"><path d="M2 1L4.2 3L2 5Z" fill="#bbb"/></svg>
<div style="position:absolute;left:62.2px;top:197px;width:11.8px;height:16px;background:#f6f6f6;border:0.6px solid #e6e6e6;border-radius:1.5px"></div>
<svg style="position:absolute;left:65.10000000000001px;top:202px;overflow:visible" width="6" height="6" viewBox="0 0 6 6"><path d="M0.6 1L2.8 3L0.6 5Z M3 1L5.2 3L3 5Z" fill="#bbb"/></svg>
<div style="position:absolute;left:76.3px;top:197px;width:11.8px;height:16px;background:#f6f6f6;border:0.6px solid #e6e6e6;border-radius:1.5px"></div>
<svg style="position:absolute;left:79.2px;top:202px;overflow:visible" width="6" height="6" viewBox="0 0 6 6"><path d="M0.4 1L2.5 3L0.4 5Z M2.7 1L4.8 3L2.7 5Z" fill="#bbb"/><path d="M5.4 1V5" stroke="#bbb" stroke-width="0.9"/></svg>
<div style="position:absolute;left:90.5px;top:197px;width:11.8px;height:16px;background:#fff;border:0.6px solid #dcdcdc;border-radius:1.5px;box-shadow:0 0.5px 0.5px rgba(0,0,0,0.08)"></div>
<svg style="position:absolute;left:93.4px;top:202px;overflow:visible" width="6" height="6" viewBox="0 0 6 6"><path d="M3 0.2V5.8M0.2 3H5.8" stroke="#1e9a1e" stroke-width="1.3"/></svg>
<div style="position:absolute;left:104.5px;top:197px;width:11.8px;height:16px;background:#fff;border:0.6px solid #dcdcdc;border-radius:1.5px;box-shadow:0 0.5px 0.5px rgba(0,0,0,0.08)"></div>
<svg style="position:absolute;left:107.4px;top:202px;overflow:visible" width="6" height="6" viewBox="0 0 6 6"><path d="M0.2 3H5.8" stroke="#d42020" stroke-width="1.3"/></svg>
<div style="position:absolute;left:118.6px;top:197px;width:11.8px;height:16px;background:#fff;border:0.6px solid #dcdcdc;border-radius:1.5px;box-shadow:0 0.5px 0.5px rgba(0,0,0,0.08)"></div>
<svg style="position:absolute;left:121.5px;top:202px;overflow:visible" width="6" height="6" viewBox="0 0 6 6"><path d="M0.8 4L3 1.8L5.2 4Z" fill="#222"/></svg>
<div style="position:absolute;left:132.6px;top:197px;width:11.8px;height:16px;background:#f6f6f6;border:0.6px solid #e6e6e6;border-radius:1.5px"></div>
<svg style="position:absolute;left:135.5px;top:202px;overflow:visible" width="6" height="6" viewBox="0 0 6 6"><path d="M0.6 3.2L2.3 4.8L5.6 1.2" stroke="#9a9a9a" stroke-width="0.8" fill="none"/></svg>
<div style="position:absolute;left:146.7px;top:197px;width:11.8px;height:16px;background:#f6f6f6;border:0.6px solid #e6e6e6;border-radius:1.5px"></div>
<svg style="position:absolute;left:149.6px;top:202px;overflow:visible" width="6" height="6" viewBox="0 0 6 6"><path d="M0.8 0.8L5.2 5.2M5.2 0.8L0.8 5.2" stroke="#8a8a8a" stroke-width="0.8"/></svg>
<div style="position:absolute;left:160.6px;top:197px;width:11.8px;height:16px;background:#fff;border:0.6px solid #dcdcdc;border-radius:1.5px;box-shadow:0 0.5px 0.5px rgba(0,0,0,0.08)"></div>
<svg style="position:absolute;left:163.5px;top:202px;overflow:visible" width="6" height="6" viewBox="0 0 6 6"><path d="M0.6 4Q1.2 1.3 3.6 1.6Q4.8 1.9 5 3" stroke="#222" stroke-width="1" fill="none"/><path d="M3.6 2.6H6.2V4.4H4.4Z" fill="#222"/></svg>
<div style="position:absolute;left:174.6px;top:197px;width:11.8px;height:16px;background:#fff;border:0.6px solid #dcdcdc;border-radius:1.5px;box-shadow:0 0.5px 0.5px rgba(0,0,0,0.08)"></div>
<svg style="position:absolute;left:177.5px;top:202px;overflow:visible" width="6" height="6" viewBox="0 0 6 6"><path d="M3 0.2L3.8 2.2L5.8 3L3.8 3.8L3 5.8L2.2 3.8L0.2 3L2.2 2.2Z" fill="#111"/><path d="M1.2 1.2L4.8 4.8M4.8 1.2L1.2 4.8" stroke="#111" stroke-width="0.8"/><circle cx="3" cy="3" r="0.7" fill="#5560b0"/></svg>
<div style="position:absolute;left:188.6px;top:197px;width:11.8px;height:16px;background:#f6f6f6;border:0.6px solid #e6e6e6;border-radius:1.5px"></div>
<svg style="position:absolute;left:191.5px;top:202px;overflow:visible" width="6" height="6" viewBox="0 0 6 6"><path d="M3.6 1.8L4.2 3L5.6 3.4L4.2 3.8L3.6 5L3 3.8L1.6 3.4L3 3Z" fill="#9a9a9a"/><circle cx="3.6" cy="3.4" r="1" fill="#a0a0a0"/><rect x="0.3" y="0.4" width="0.9" height="0.9" fill="#666"/></svg>
<div style="position:absolute;left:202.7px;top:197px;width:11.8px;height:16px;background:#fff;border:0.6px solid #dcdcdc;border-radius:1.5px;box-shadow:0 0.5px 0.5px rgba(0,0,0,0.08)"></div>
<svg style="position:absolute;left:205.6px;top:202px;overflow:visible" width="6" height="6" viewBox="0 0 6 6"><path d="M0.6 1.2H5.4L3.7 3.2V5.2H2.3V3.2Z" fill="#f08418"/></svg>
<div style="position:absolute;left:219px;top:195.9px;width:19.7px;height:19.5px;background:#dfe6cc;border:1px solid #6d6d64;border-radius:1px"></div>
<svg style="position:absolute;left:220.5px;top:197.4px" width="16.7" height="16.5" viewBox="0 0 16 16" preserveAspectRatio="none"><path transform="translate(3.2 3.2) rotate(0) scale(0.9)" d="M-2.6 -2.6H1.4L0.6 -1.2L2.4 0.6L0.6 2.4L-1.2 0.6L-2.6 1.4Z" fill="#8ed41e" stroke="#5aa010" stroke-width="0.7" stroke-linejoin="round"/><path transform="translate(12.8 3.2) rotate(90) scale(0.9)" d="M-2.6 -2.6H1.4L0.6 -1.2L2.4 0.6L0.6 2.4L-1.2 0.6L-2.6 1.4Z" fill="#8ed41e" stroke="#5aa010" stroke-width="0.7" stroke-linejoin="round"/><path transform="translate(12.8 12.8) rotate(180) scale(0.9)" d="M-2.6 -2.6H1.4L0.6 -1.2L2.4 0.6L0.6 2.4L-1.2 0.6L-2.6 1.4Z" fill="#8ed41e" stroke="#5aa010" stroke-width="0.7" stroke-linejoin="round"/><path transform="translate(3.2 12.8) rotate(270) scale(0.9)" d="M-2.6 -2.6H1.4L0.6 -1.2L2.4 0.6L0.6 2.4L-1.2 0.6L-2.6 1.4Z" fill="#8ed41e" stroke="#5aa010" stroke-width="0.7" stroke-linejoin="round"/></svg>
<div style="position:absolute;left:241.9px;top:195.9px;width:19.7px;height:19.5px;background:#dfe6cc;border:1px solid #6d6d64;border-radius:1px"></div>
<svg style="position:absolute;left:243.4px;top:197.4px" width="16.7" height="16.5" viewBox="0 0 16 16" preserveAspectRatio="none"><path transform="translate(3.2 3.2) rotate(0) scale(0.9)" d="M2.4 2.4H-1.4L-0.6 1.2L-2.4 -0.6L-0.6 -2.4L1.2 -0.6L2.4 -1.4Z" fill="#8ed41e" stroke="#5aa010" stroke-width="0.7" stroke-linejoin="round"/><path transform="translate(12.8 3.2) rotate(90) scale(0.9)" d="M2.4 2.4H-1.4L-0.6 1.2L-2.4 -0.6L-0.6 -2.4L1.2 -0.6L2.4 -1.4Z" fill="#8ed41e" stroke="#5aa010" stroke-width="0.7" stroke-linejoin="round"/><path transform="translate(12.8 12.8) rotate(180) scale(0.9)" d="M2.4 2.4H-1.4L-0.6 1.2L-2.4 -0.6L-0.6 -2.4L1.2 -0.6L2.4 -1.4Z" fill="#8ed41e" stroke="#5aa010" stroke-width="0.7" stroke-linejoin="round"/><path transform="translate(3.2 12.8) rotate(270) scale(0.9)" d="M2.4 2.4H-1.4L-0.6 1.2L-2.4 -0.6L-0.6 -2.4L1.2 -0.6L2.4 -1.4Z" fill="#8ed41e" stroke="#5aa010" stroke-width="0.7" stroke-linejoin="round"/></svg>
<div style="position:absolute;left:264.3px;top:195.9px;width:19.7px;height:19.5px;background:#dfe6cc;border:1px solid #6d6d64;border-radius:1px"></div>
<svg style="position:absolute;left:265.8px;top:197.4px" width="16.7" height="16.5" viewBox="0 0 16 16" preserveAspectRatio="none"><path d="M3.5 0.8H10.5L14 4.3V15H3.5Z" fill="#f2f4fa" stroke="#a8b4cc" stroke-width="0.5"/><path d="M10.5 0.8V4.3H14" fill="#dde3ee" stroke="#a8b4cc" stroke-width="0.4"/><rect x="0.6" y="3.6" width="7.8" height="4.4" rx="1" fill="#3d9a2a"/><text x="4.5" y="7.1" font-family="Liberation Sans" font-weight="bold" font-size="3.4" fill="#cfe8c0" text-anchor="middle">XLS</text><rect x="8.6" y="9" width="7" height="6.8" rx="0.6" fill="#3e4a6a"/><rect x="10" y="9" width="4" height="2.2" fill="#a8b2c8"/><rect x="9.8" y="13" width="4.6" height="2.5" fill="#f4f6fa"/><rect x="9.8" y="14.8" width="4.6" height="0.8" fill="#6ab0e8"/></svg>
<div style="position:absolute;left:288.4px;top:198.6px;width:6.8px;height:6.8px;background:#fff;border:0.7px solid #777;border-radius:1px"></div>
<div class="t" style="left:296.8px;top:198.0px;font-size:5.8px;line-height:8px;color:#2a2a2a;font-weight:normal;-webkit-text-stroke:0.1px currentColor;text-decoration:underline;text-decoration-color:#888;text-decoration-thickness:0.5px">Gyors üzemmód</div>
<div style="position:absolute;left:357.3px;top:198.6px;width:6.8px;height:6.8px;background:#fff;border:0.7px solid #777;border-radius:1px"></div>
<div class="t" style="left:365.5px;top:198.0px;font-size:5.8px;line-height:8px;color:#2a2a2a;font-weight:normal;-webkit-text-stroke:0.1px currentColor">Szűrő sor</div>
<div style="position:absolute;left:288.4px;top:213.2px;width:6.8px;height:6.8px;background:#1f6fd1;border-radius:1px"></div>
<svg style="position:absolute;left:289.7px;top:215.0px;overflow:visible" width="4.3" height="3.2" viewBox="0 0 4.3 3.2"><path d="M0.3 1.6L1.6 2.9L4 0.3" stroke="#fff" stroke-width="0.7" fill="none"/></svg>
<div class="t" style="left:296.8px;top:212.6px;font-size:5.8px;line-height:8px;color:#2a2a2a;font-weight:normal;-webkit-text-stroke:0.1px currentColor;text-decoration:underline;text-decoration-color:#555;text-decoration-thickness:0.5px">Automata szerkesztés</div>
<div style="position:absolute;left:5px;top:225.3px;width:1013px;height:304.2px;background:#a3c3ea"></div>
<div style="position:absolute;left:1018px;top:225.3px;width:1px;height:304.2px;background:#dcdcdc"></div>
<div style="position:absolute;left:5.2px;top:225.3px;width:993.3px;height:0.8px;background:#555"></div>
<div style="position:absolute;left:11.5px;top:225.6px;width:369.5px;height:9.900000000000006px;background:#ffa477"></div>
<div style="position:absolute;left:381px;top:225.6px;width:617.3px;height:9.900000000000006px;background:#0a84f7"></div>
<div style="position:absolute;left:5.4px;top:225.6px;width:6.1px;height:9.900000000000006px;background:#ffa477"></div>
<svg style="position:absolute;left:7px;top:227.8px;overflow:visible" width="3" height="5.6" viewBox="0 0 3 5.6"><rect x="0" y="0" width="3" height="5.6" fill="#e89a70"/><path d="M0.2 0.8H2.8M0.2 2.2H2.8M0.2 3.6H2.8M0.2 5H2.8" stroke="#8a5030" stroke-width="0.6"/><path d="M0.3 0.3V5.3" stroke="#8a5030" stroke-width="0.5"/></svg>
<div class="t" style="left:196px;top:226.8px;font-size:6.4px;line-height:8px;color:#1a1008;font-weight:bold;transform:translateX(-50%);">Fontos Adatok</div>
<div class="t" style="left:689.7px;top:226.8px;font-size:6.4px;line-height:8px;color:#001a40;font-weight:bold;transform:translateX(-50%);">Kiegészítő adatok</div>
<div style="position:absolute;left:5.4px;top:235.0px;width:992.9px;height:0.9px;background:#3a5070"></div>
<div style="position:absolute;left:5.4px;top:235.5px;width:992.9px;height:17.80000000000001px;background:#6b9bdb"></div>
<svg style="position:absolute;left:7px;top:241.6px;overflow:visible" width="3" height="5.4" viewBox="0 0 3 5.4"><path d="M0.2 0.6H2.8M0.2 2H2.8M0.2 3.4H2.8M0.2 4.8H2.8" stroke="#1e2e50" stroke-width="0.7"/></svg>
<div class="t" style="left:13.1px;top:240.6px;font-size:6.4px;line-height:8px;color:#0a0a14;font-weight:bold;">Készítve</div>
<div class="t" style="left:65.1px;top:240.6px;font-size:6.4px;line-height:8px;color:#0a0a14;font-weight:bold;">Módosítva</div>
<div class="t" style="left:119.1px;top:240.6px;font-size:6.4px;line-height:8px;color:#0a0a14;font-weight:bold;">Ügyfél</div>
<div class="t" style="left:210.1px;top:240.6px;font-size:6.4px;line-height:8px;color:#0a0a14;font-weight:bold;">Státusz</div>
<div class="t" style="left:263.6px;top:240.6px;font-size:6.4px;line-height:8px;color:#0a0a14;font-weight:bold;">Központi e-mail</div>
<div class="t" style="left:335.6px;top:240.6px;font-size:6.4px;line-height:8px;color:#0a0a14;font-weight:bold;">Telefon</div>
<div class="t" style="left:382.6px;top:240.6px;font-size:6.4px;line-height:8px;color:#0a0a14;font-weight:bold;">Megjegyzés</div>
<div class="t" style="left:429.90000000000003px;top:240.6px;font-size:6.4px;line-height:8px;color:#0a0a14;font-weight:bold;">Leírás</div>
<div class="t" style="left:468.6px;top:240.6px;font-size:6.4px;line-height:8px;color:#0a0a14;font-weight:bold;">Saját ügyintéző</div>
<div class="t" style="left:525.2px;top:240.6px;font-size:6.4px;line-height:8px;color:#0a0a14;font-weight:bold;">Facebook</div>
<div class="t" style="left:577.0px;top:237.0px;font-size:6.4px;line-height:7.4px;color:#0a0a14;font-weight:bold;">Cégbejegyzési</div>
<div class="t" style="left:577.0px;top:244.4px;font-size:6.4px;line-height:7.4px;color:#0a0a14;font-weight:bold;">szám</div>
<div class="t" style="left:640.6px;top:240.6px;font-size:6.4px;line-height:8px;color:#0a0a14;font-weight:bold;">Hol hallott rólunk?</div>
<div class="t" style="left:704.0px;top:240.6px;font-size:6.4px;line-height:8px;color:#0a0a14;font-weight:bold;">Adószám</div>
<div class="t" style="left:757.5px;top:240.6px;font-size:6.4px;line-height:8px;color:#0a0a14;font-weight:bold;">Fizetés mód</div>
<div class="t" style="left:928.1px;top:240.6px;font-size:6.4px;line-height:8px;color:#0a0a14;font-weight:bold;">Fizetési határidő</div>
<div style="position:absolute;left:5.4px;top:252.5px;width:992.9px;height:1px;background:#2e4266"></div>
<div style="position:absolute;left:11.5px;top:253.3px;width:986.8px;height:17.78px;background:#8080ff"></div>
<div style="position:absolute;left:5.4px;top:253.3px;width:6.1px;height:17.78px;background:#a9c8ee;border:0.6px solid #5f7fa8"></div>
<div class="t" style="left:13.1px;top:256.09px;font-size:6.0px;line-height:7.6px;color:#10104a;font-weight:normal;letter-spacing:0.05px">2021.11.30.</div>
<div class="t" style="left:13.1px;top:262.69px;font-size:6.0px;line-height:7.6px;color:#10104a;font-weight:normal;letter-spacing:0.05px">14:04:15</div>
<div class="t" style="left:65.1px;top:256.09px;font-size:6.0px;line-height:7.6px;color:#10104a;font-weight:normal;letter-spacing:0.05px">2022.05.18.</div>
<div class="t" style="left:65.1px;top:262.69px;font-size:6.0px;line-height:7.6px;color:#10104a;font-weight:normal;letter-spacing:0.05px">8:31:07</div>
<div class="t" style="left:118.7px;top:258.19px;font-size:6.0px;line-height:8px;color:#10104a;font-weight:normal;">Dani Kft.</div>
<div class="t" style="left:209.7px;top:258.19px;font-size:6.0px;line-height:8px;color:#10104a;font-weight:normal;">Fontos</div>
<div class="t" style="left:468.2px;top:258.19px;font-size:6.0px;line-height:8px;color:#10104a;font-weight:normal;">Nagy Emese</div>
<div class="t" style="left:640.2px;top:258.19px;font-size:6.0px;line-height:8px;color:#10104a;font-weight:normal;">Újság hirdetés</div>
<div class="t" style="left:703.6px;top:258.19px;font-size:6.0px;line-height:8px;color:#10104a;font-weight:normal;">1122334455</div>
<svg style="position:absolute;left:401px;top:258.59px" width="8" height="7.2" viewBox="0 0 16 16" preserveAspectRatio="none"><path d="M0.5 0.5H12L15.5 4V15.5H0.5Z" fill="#f8f8f8" stroke="#d8d8d8" stroke-width="0.6"/><text x="8" y="13" font-family="Liberation Sans" font-size="11" fill="#9a9a9a" text-anchor="middle">a</text></svg>
<svg style="position:absolute;left:443.5px;top:258.59px" width="8" height="7.2" viewBox="0 0 16 16" preserveAspectRatio="none"><path d="M0.5 0.5H12L15.5 4V15.5H0.5Z" fill="#f8f8f8" stroke="#d8d8d8" stroke-width="0.6"/><text x="8" y="13" font-family="Liberation Sans" font-size="11" fill="#9a9a9a" text-anchor="middle">a</text></svg>
<svg style="position:absolute;left:757.5px;top:254.8px;overflow:visible" width="6" height="6" viewBox="0 0 6 6"><circle cx="3" cy="3" r="2.75" fill="#fff" stroke="#a0a0a0" stroke-width="0.4"/><circle cx="3" cy="3" r="1.1" fill="#111"/></svg>
<div class="t" style="left:766.1px;top:254.10000000000002px;font-size:6.0px;line-height:8px;color:#10104a;font-weight:normal;">Átutalás</div>
<svg style="position:absolute;left:757.5px;top:263.0px;overflow:visible" width="6" height="6" viewBox="0 0 6 6"><circle cx="3" cy="3" r="2.75" fill="#fff" stroke="#a0a0a0" stroke-width="0.4"/></svg>
<div class="t" style="left:766.1px;top:262.3px;font-size:6.0px;line-height:8px;color:#10104a;font-weight:normal;">Készpénz</div>
<svg style="position:absolute;left:813.6px;top:254.8px;overflow:visible" width="6" height="6" viewBox="0 0 6 6"><circle cx="3" cy="3" r="2.75" fill="#fff" stroke="#a0a0a0" stroke-width="0.4"/></svg>
<div class="t" style="left:822.2px;top:254.10000000000002px;font-size:6.0px;line-height:8px;color:#10104a;font-weight:normal;">Bankkártya</div>
<svg style="position:absolute;left:813.6px;top:263.0px;overflow:visible" width="6" height="6" viewBox="0 0 6 6"><circle cx="3" cy="3" r="2.75" fill="#fff" stroke="#a0a0a0" stroke-width="0.4"/></svg>
<div class="t" style="left:822.2px;top:262.3px;font-size:6.0px;line-height:8px;color:#10104a;font-weight:normal;">Utánvét</div>
<svg style="position:absolute;left:869.6px;top:254.8px;overflow:visible" width="6" height="6" viewBox="0 0 6 6"><circle cx="3" cy="3" r="2.75" fill="#fff" stroke="#a0a0a0" stroke-width="0.4"/></svg>
<div class="t" style="left:878.2px;top:254.10000000000002px;font-size:6.0px;line-height:8px;color:#10104a;font-weight:normal;">Csop.beszedés</div>
<div style="position:absolute;left:11.5px;top:270.48px;width:986.8px;height:0.7px;background:rgba(120,120,120,0.45)"></div>
<div style="position:absolute;left:11.5px;top:271.08000000000004px;width:986.8px;height:17.78px;background:#c0c0c0"></div>
<div style="position:absolute;left:5.4px;top:271.08000000000004px;width:6.1px;height:17.78px;background:#a9c8ee;border:0.6px solid #5f7fa8"></div>
<div class="t" style="left:13.1px;top:273.87px;font-size:6.0px;line-height:7.6px;color:#2a2a2a;font-weight:normal;letter-spacing:0.05px">2022.04.06.</div>
<div class="t" style="left:13.1px;top:280.47px;font-size:6.0px;line-height:7.6px;color:#2a2a2a;font-weight:normal;letter-spacing:0.05px">15:52:08</div>
<div class="t" style="left:65.1px;top:273.87px;font-size:6.0px;line-height:7.6px;color:#2a2a2a;font-weight:normal;letter-spacing:0.05px">2022.05.18.</div>
<div class="t" style="left:65.1px;top:280.47px;font-size:6.0px;line-height:7.6px;color:#2a2a2a;font-weight:normal;letter-spacing:0.05px">8:31:09</div>
<div class="t" style="left:118.7px;top:275.97px;font-size:6.0px;line-height:8px;color:#2a2a2a;font-weight:normal;">Kiskeres Károly</div>
<div class="t" style="left:209.7px;top:275.97px;font-size:6.0px;line-height:8px;color:#2a2a2a;font-weight:normal;">Lezárt</div>
<div class="t" style="left:468.2px;top:275.97px;font-size:6.0px;line-height:8px;color:#2a2a2a;font-weight:normal;">Kovács István</div>
<div class="t" style="left:640.2px;top:275.97px;font-size:6.0px;line-height:8px;color:#2a2a2a;font-weight:normal;">Rádió</div>
<svg style="position:absolute;left:401px;top:276.37px" width="8" height="7.2" viewBox="0 0 16 16" preserveAspectRatio="none"><path d="M0.5 0.5H12L15.5 4V15.5H0.5Z" fill="#f8f8f8" stroke="#d8d8d8" stroke-width="0.6"/><text x="8" y="13" font-family="Liberation Sans" font-size="11" fill="#9a9a9a" text-anchor="middle">a</text></svg>
<svg style="position:absolute;left:443.5px;top:276.37px" width="8" height="7.2" viewBox="0 0 16 16" preserveAspectRatio="none"><path d="M0.5 0.5H12L15.5 4V15.5H0.5Z" fill="#f8f8f8" stroke="#d8d8d8" stroke-width="0.6"/><text x="8" y="13" font-family="Liberation Sans" font-size="11" fill="#9a9a9a" text-anchor="middle">a</text></svg>
<svg style="position:absolute;left:757.5px;top:272.58000000000004px;overflow:visible" width="6" height="6" viewBox="0 0 6 6"><circle cx="3" cy="3" r="2.75" fill="#fff" stroke="#a0a0a0" stroke-width="0.4"/><circle cx="3" cy="3" r="1.1" fill="#111"/></svg>
<div class="t" style="left:766.1px;top:271.88000000000005px;font-size:6.0px;line-height:8px;color:#2a2a2a;font-weight:normal;">Átutalás</div>
<svg style="position:absolute;left:757.5px;top:280.78000000000003px;overflow:visible" width="6" height="6" viewBox="0 0 6 6"><circle cx="3" cy="3" r="2.75" fill="#fff" stroke="#a0a0a0" stroke-width="0.4"/></svg>
<div class="t" style="left:766.1px;top:280.08000000000004px;font-size:6.0px;line-height:8px;color:#2a2a2a;font-weight:normal;">Készpénz</div>
<svg style="position:absolute;left:813.6px;top:272.58000000000004px;overflow:visible" width="6" height="6" viewBox="0 0 6 6"><circle cx="3" cy="3" r="2.75" fill="#fff" stroke="#a0a0a0" stroke-width="0.4"/></svg>
<div class="t" style="left:822.2px;top:271.88000000000005px;font-size:6.0px;line-height:8px;color:#2a2a2a;font-weight:normal;">Bankkártya</div>
<svg style="position:absolute;left:813.6px;top:280.78000000000003px;overflow:visible" width="6" height="6" viewBox="0 0 6 6"><circle cx="3" cy="3" r="2.75" fill="#fff" stroke="#a0a0a0" stroke-width="0.4"/></svg>
<div class="t" style="left:822.2px;top:280.08000000000004px;font-size:6.0px;line-height:8px;color:#2a2a2a;font-weight:normal;">Utánvét</div>
<svg style="position:absolute;left:869.6px;top:272.58000000000004px;overflow:visible" width="6" height="6" viewBox="0 0 6 6"><circle cx="3" cy="3" r="2.75" fill="#fff" stroke="#a0a0a0" stroke-width="0.4"/></svg>
<div class="t" style="left:878.2px;top:271.88000000000005px;font-size:6.0px;line-height:8px;color:#2a2a2a;font-weight:normal;">Csop.beszedés</div>
<div style="position:absolute;left:11.5px;top:288.26px;width:986.8px;height:0.7px;background:rgba(120,120,120,0.45)"></div>
<div style="position:absolute;left:11.5px;top:288.86px;width:986.8px;height:17.78px;background:#d9f8b6"></div>
<div style="position:absolute;left:5.4px;top:288.86px;width:6.1px;height:17.78px;background:#a9c8ee;border:0.6px solid #5f7fa8"></div>
<div class="t" style="left:13.1px;top:291.65px;font-size:6.0px;line-height:7.6px;color:#202a18;font-weight:normal;letter-spacing:0.05px">2022.03.30.</div>
<div class="t" style="left:13.1px;top:298.25px;font-size:6.0px;line-height:7.6px;color:#202a18;font-weight:normal;letter-spacing:0.05px">8:18:56</div>
<div class="t" style="left:65.1px;top:291.65px;font-size:6.0px;line-height:7.6px;color:#202a18;font-weight:normal;letter-spacing:0.05px">2022.05.18.</div>
<div class="t" style="left:65.1px;top:298.25px;font-size:6.0px;line-height:7.6px;color:#202a18;font-weight:normal;letter-spacing:0.05px">8:31:11</div>
<div class="t" style="left:118.7px;top:293.75px;font-size:6.0px;line-height:8px;color:#202a18;font-weight:normal;">Kölcsönzős Béla Bt.</div>
<div class="t" style="left:209.7px;top:293.75px;font-size:6.0px;line-height:8px;color:#202a18;font-weight:normal;">Nyitott</div>
<div class="t" style="left:263.2px;top:293.75px;font-size:6.0px;line-height:8px;color:#202a18;font-weight:normal;">kolcs_bela@kb.bt</div>
<div class="t" style="left:335.2px;top:293.75px;font-size:6.0px;line-height:8px;color:#202a18;font-weight:normal;">+36701234567</div>
<div class="t" style="left:468.2px;top:293.75px;font-size:6.0px;line-height:8px;color:#202a18;font-weight:normal;">Kovács István</div>
<div class="t" style="left:640.2px;top:293.75px;font-size:6.0px;line-height:8px;color:#202a18;font-weight:normal;">Rádió</div>
<svg style="position:absolute;left:401px;top:294.15px" width="8" height="7.2" viewBox="0 0 16 16" preserveAspectRatio="none"><path d="M0.5 0.5H12L15.5 4V15.5H0.5Z" fill="#f8f8f8" stroke="#d8d8d8" stroke-width="0.6"/><text x="8" y="13" font-family="Liberation Sans" font-size="11" fill="#9a9a9a" text-anchor="middle">a</text></svg>
<svg style="position:absolute;left:443.5px;top:294.15px" width="8" height="7.2" viewBox="0 0 16 16" preserveAspectRatio="none"><path d="M0.5 0.5H12L15.5 4V15.5H0.5Z" fill="#f8f8f8" stroke="#d8d8d8" stroke-width="0.6"/><text x="8" y="13" font-family="Liberation Sans" font-size="11" fill="#9a9a9a" text-anchor="middle">a</text></svg>
<svg style="position:absolute;left:757.5px;top:290.36px;overflow:visible" width="6" height="6" viewBox="0 0 6 6"><circle cx="3" cy="3" r="2.75" fill="#fff" stroke="#a0a0a0" stroke-width="0.4"/></svg>
<div class="t" style="left:766.1px;top:289.66px;font-size:6.0px;line-height:8px;color:#202a18;font-weight:normal;">Átutalás</div>
<svg style="position:absolute;left:757.5px;top:298.56px;overflow:visible" width="6" height="6" viewBox="0 0 6 6"><circle cx="3" cy="3" r="2.75" fill="#fff" stroke="#a0a0a0" stroke-width="0.4"/><circle cx="3" cy="3" r="1.1" fill="#111"/></svg>
<div class="t" style="left:766.1px;top:297.86px;font-size:6.0px;line-height:8px;color:#202a18;font-weight:normal;">Készpénz</div>
<svg style="position:absolute;left:813.6px;top:290.36px;overflow:visible" width="6" height="6" viewBox="0 0 6 6"><circle cx="3" cy="3" r="2.75" fill="#fff" stroke="#a0a0a0" stroke-width="0.4"/></svg>
<div class="t" style="left:822.2px;top:289.66px;font-size:6.0px;line-height:8px;color:#202a18;font-weight:normal;">Bankkártya</div>
<svg style="position:absolute;left:813.6px;top:298.56px;overflow:visible" width="6" height="6" viewBox="0 0 6 6"><circle cx="3" cy="3" r="2.75" fill="#fff" stroke="#a0a0a0" stroke-width="0.4"/></svg>
<div class="t" style="left:822.2px;top:297.86px;font-size:6.0px;line-height:8px;color:#202a18;font-weight:normal;">Utánvét</div>
<svg style="position:absolute;left:869.6px;top:290.36px;overflow:visible" width="6" height="6" viewBox="0 0 6 6"><circle cx="3" cy="3" r="2.75" fill="#fff" stroke="#a0a0a0" stroke-width="0.4"/></svg>
<div class="t" style="left:878.2px;top:289.66px;font-size:6.0px;line-height:8px;color:#202a18;font-weight:normal;">Csop.beszedés</div>
<div style="position:absolute;left:11.5px;top:306.03999999999996px;width:986.8px;height:0.7px;background:rgba(120,120,120,0.45)"></div>
<div style="position:absolute;left:11.5px;top:306.64px;width:986.8px;height:17.78px;background:#ff0000"></div>
<div style="position:absolute;left:5.4px;top:306.64px;width:6.1px;height:17.78px;background:#a9c8ee;border:0.6px solid #5f7fa8"></div>
<div class="t" style="left:13.1px;top:309.42999999999995px;font-size:6.0px;line-height:7.6px;color:#5a0000;font-weight:normal;letter-spacing:0.05px">2022.04.06.</div>
<div class="t" style="left:13.1px;top:316.03px;font-size:6.0px;line-height:7.6px;color:#5a0000;font-weight:normal;letter-spacing:0.05px">15:52:21</div>
<div class="t" style="left:65.1px;top:309.42999999999995px;font-size:6.0px;line-height:7.6px;color:#5a0000;font-weight:normal;letter-spacing:0.05px">2022.05.18.</div>
<div class="t" style="left:65.1px;top:316.03px;font-size:6.0px;line-height:7.6px;color:#5a0000;font-weight:normal;letter-spacing:0.05px">8:32:22</div>
<div class="t" style="left:118.7px;top:311.53px;font-size:6.0px;line-height:8px;color:#5a0000;font-weight:normal;">Nagykeres Nándor</div>
<div class="t" style="left:209.7px;top:311.53px;font-size:6.0px;line-height:8px;color:#5a0000;font-weight:normal;">Ismerős</div>
<div class="t" style="left:468.2px;top:311.53px;font-size:6.0px;line-height:8px;color:#5a0000;font-weight:normal;">rendszergazda</div>
<div class="t" style="left:640.2px;top:311.53px;font-size:6.0px;line-height:8px;color:#5a0000;font-weight:normal;">Ismerős</div>
<svg style="position:absolute;left:401px;top:311.92999999999995px" width="8" height="7.2" viewBox="0 0 16 16" preserveAspectRatio="none"><path d="M0.5 0.5H12L15.5 4V15.5H0.5Z" fill="#f8f8f8" stroke="#d8d8d8" stroke-width="0.6"/><text x="8" y="13" font-family="Liberation Sans" font-size="11" fill="#9a9a9a" text-anchor="middle">a</text></svg>
<svg style="position:absolute;left:443.5px;top:311.92999999999995px" width="8" height="7.2" viewBox="0 0 16 16" preserveAspectRatio="none"><path d="M0.5 0.5H12L15.5 4V15.5H0.5Z" fill="#f8f8f8" stroke="#d8d8d8" stroke-width="0.6"/><text x="8" y="13" font-family="Liberation Sans" font-size="11" fill="#9a9a9a" text-anchor="middle">a</text></svg>
<svg style="position:absolute;left:757.5px;top:308.14px;overflow:visible" width="6" height="6" viewBox="0 0 6 6"><circle cx="3" cy="3" r="2.75" fill="#fff" stroke="#a0a0a0" stroke-width="0.4"/><circle cx="3" cy="3" r="1.1" fill="#111"/></svg>
<div class="t" style="left:766.1px;top:307.44px;font-size:6.0px;line-height:8px;color:#5a0000;font-weight:normal;">Átutalás</div>
<svg style="position:absolute;left:757.5px;top:316.34px;overflow:visible" width="6" height="6" viewBox="0 0 6 6"><circle cx="3" cy="3" r="2.75" fill="#fff" stroke="#a0a0a0" stroke-width="0.4"/></svg>
<div class="t" style="left:766.1px;top:315.64px;font-size:6.0px;line-height:8px;color:#5a0000;font-weight:normal;">Készpénz</div>
<svg style="position:absolute;left:813.6px;top:308.14px;overflow:visible" width="6" height="6" viewBox="0 0 6 6"><circle cx="3" cy="3" r="2.75" fill="#fff" stroke="#a0a0a0" stroke-width="0.4"/></svg>
<div class="t" style="left:822.2px;top:307.44px;font-size:6.0px;line-height:8px;color:#5a0000;font-weight:normal;">Bankkártya</div>
<svg style="position:absolute;left:813.6px;top:316.34px;overflow:visible" width="6" height="6" viewBox="0 0 6 6"><circle cx="3" cy="3" r="2.75" fill="#fff" stroke="#a0a0a0" stroke-width="0.4"/></svg>
<div class="t" style="left:822.2px;top:315.64px;font-size:6.0px;line-height:8px;color:#5a0000;font-weight:normal;">Utánvét</div>
<svg style="position:absolute;left:869.6px;top:308.14px;overflow:visible" width="6" height="6" viewBox="0 0 6 6"><circle cx="3" cy="3" r="2.75" fill="#fff" stroke="#a0a0a0" stroke-width="0.4"/></svg>
<div class="t" style="left:878.2px;top:307.44px;font-size:6.0px;line-height:8px;color:#5a0000;font-weight:normal;">Csop.beszedés</div>
<div style="position:absolute;left:11.5px;top:323.81999999999994px;width:986.8px;height:0.7px;background:rgba(120,120,120,0.45)"></div>
<div style="position:absolute;left:11.5px;top:324.42px;width:986.8px;height:17.78px;background:#8080ff"></div>
<div style="position:absolute;left:5.4px;top:324.42px;width:6.1px;height:17.78px;background:#a9c8ee;border:0.6px solid #5f7fa8"></div>
<div class="t" style="left:13.1px;top:327.21px;font-size:6.0px;line-height:7.6px;color:#10104a;font-weight:normal;letter-spacing:0.05px">2022.04.06.</div>
<div class="t" style="left:13.1px;top:333.81px;font-size:6.0px;line-height:7.6px;color:#10104a;font-weight:normal;letter-spacing:0.05px">14:23:33</div>
<div class="t" style="left:65.1px;top:327.21px;font-size:6.0px;line-height:7.6px;color:#10104a;font-weight:normal;letter-spacing:0.05px">2022.05.18.</div>
<div class="t" style="left:65.1px;top:333.81px;font-size:6.0px;line-height:7.6px;color:#10104a;font-weight:normal;letter-spacing:0.05px">8:38:16</div>
<div class="t" style="left:118.7px;top:329.31px;font-size:6.0px;line-height:8px;color:#10104a;font-weight:normal;">Szerszámos Kft.</div>
<div class="t" style="left:209.7px;top:329.31px;font-size:6.0px;line-height:8px;color:#10104a;font-weight:normal;">Fontos</div>
<div class="t" style="left:263.2px;top:329.31px;font-size:6.0px;line-height:8px;color:#10104a;font-weight:normal;">szersz@mos.hu</div>
<div class="t" style="left:335.2px;top:329.31px;font-size:6.0px;line-height:8px;color:#10104a;font-weight:normal;">+36703798978</div>
<div class="t" style="left:468.2px;top:329.31px;font-size:6.0px;line-height:8px;color:#10104a;font-weight:normal;">rendszergazda</div>
<div class="t" style="left:640.2px;top:329.31px;font-size:6.0px;line-height:8px;color:#10104a;font-weight:normal;">TV</div>
<div class="t" style="left:703.6px;top:329.31px;font-size:6.0px;line-height:8px;color:#10104a;font-weight:normal;">12345679-8-76</div>
<svg style="position:absolute;left:401px;top:329.71px" width="8" height="7.2" viewBox="0 0 16 16" preserveAspectRatio="none"><path d="M0.5 0.5H12L15.5 4V15.5H0.5Z" fill="#f6f8fc" stroke="#9ab" stroke-width="0.6"/><text x="8" y="13.5" font-family="Liberation Sans" font-weight="bold" font-size="12" fill="#3a70b8" text-anchor="middle">A</text></svg>
<svg style="position:absolute;left:443.5px;top:329.71px" width="8" height="7.2" viewBox="0 0 16 16" preserveAspectRatio="none"><path d="M0.5 0.5H12L15.5 4V15.5H0.5Z" fill="#f8f8f8" stroke="#d8d8d8" stroke-width="0.6"/><text x="8" y="13" font-family="Liberation Sans" font-size="11" fill="#9a9a9a" text-anchor="middle">a</text></svg>
<svg style="position:absolute;left:757.5px;top:325.92px;overflow:visible" width="6" height="6" viewBox="0 0 6 6"><circle cx="3" cy="3" r="2.75" fill="#fff" stroke="#a0a0a0" stroke-width="0.4"/><circle cx="3" cy="3" r="1.1" fill="#111"/></svg>
<div class="t" style="left:766.1px;top:325.22px;font-size:6.0px;line-height:8px;color:#10104a;font-weight:normal;">Átutalás</div>
<svg style="position:absolute;left:757.5px;top:334.12px;overflow:visible" width="6" height="6" viewBox="0 0 6 6"><circle cx="3" cy="3" r="2.75" fill="#fff" stroke="#a0a0a0" stroke-width="0.4"/></svg>
<div class="t" style="left:766.1px;top:333.42px;font-size:6.0px;line-height:8px;color:#10104a;font-weight:normal;">Készpénz</div>
<svg style="position:absolute;left:813.6px;top:325.92px;overflow:visible" width="6" height="6" viewBox="0 0 6 6"><circle cx="3" cy="3" r="2.75" fill="#fff" stroke="#a0a0a0" stroke-width="0.4"/></svg>
<div class="t" style="left:822.2px;top:325.22px;font-size:6.0px;line-height:8px;color:#10104a;font-weight:normal;">Bankkártya</div>
<svg style="position:absolute;left:813.6px;top:334.12px;overflow:visible" width="6" height="6" viewBox="0 0 6 6"><circle cx="3" cy="3" r="2.75" fill="#fff" stroke="#a0a0a0" stroke-width="0.4"/></svg>
<div class="t" style="left:822.2px;top:333.42px;font-size:6.0px;line-height:8px;color:#10104a;font-weight:normal;">Utánvét</div>
<svg style="position:absolute;left:869.6px;top:325.92px;overflow:visible" width="6" height="6" viewBox="0 0 6 6"><circle cx="3" cy="3" r="2.75" fill="#fff" stroke="#a0a0a0" stroke-width="0.4"/></svg>
<div class="t" style="left:878.2px;top:325.22px;font-size:6.0px;line-height:8px;color:#10104a;font-weight:normal;">Csop.beszedés</div>
<div style="position:absolute;left:11.5px;top:341.6px;width:986.8px;height:0.7px;background:rgba(120,120,120,0.45)"></div>
<div style="position:absolute;left:11.5px;top:342.20000000000005px;width:986.8px;height:17.78px;background:#008000"></div>
<div style="position:absolute;left:5.4px;top:342.20000000000005px;width:6.1px;height:17.78px;background:#a9c8ee;border:0.6px solid #5f7fa8"></div>
<div class="t" style="left:13.1px;top:344.99px;font-size:6.0px;line-height:7.6px;color:#001800;font-weight:normal;letter-spacing:0.05px">2022.04.06.</div>
<div class="t" style="left:13.1px;top:351.59000000000003px;font-size:6.0px;line-height:7.6px;color:#001800;font-weight:normal;letter-spacing:0.05px">15:53:24</div>
<div class="t" style="left:65.1px;top:344.99px;font-size:6.0px;line-height:7.6px;color:#001800;font-weight:normal;letter-spacing:0.05px">2022.05.18.</div>
<div class="t" style="left:65.1px;top:351.59000000000003px;font-size:6.0px;line-height:7.6px;color:#001800;font-weight:normal;letter-spacing:0.05px">8:37:49</div>
<div class="t" style="left:118.7px;top:347.09000000000003px;font-size:6.0px;line-height:8px;color:#001800;font-weight:normal;">Tcs-s Tomi</div>
<div class="t" style="left:209.7px;top:347.09000000000003px;font-size:6.0px;line-height:8px;color:#001800;font-weight:normal;">Telefonon keresett</div>
<div class="t" style="left:468.2px;top:347.09000000000003px;font-size:6.0px;line-height:8px;color:#001800;font-weight:normal;">Kovács István</div>
<div class="t" style="left:640.2px;top:347.09000000000003px;font-size:6.0px;line-height:8px;color:#001800;font-weight:normal;">TV</div>
<svg style="position:absolute;left:401px;top:347.49px" width="8" height="7.2" viewBox="0 0 16 16" preserveAspectRatio="none"><path d="M0.5 0.5H12L15.5 4V15.5H0.5Z" fill="#f6f8fc" stroke="#9ab" stroke-width="0.6"/><text x="8" y="13.5" font-family="Liberation Sans" font-weight="bold" font-size="12" fill="#3a70b8" text-anchor="middle">A</text></svg>
<svg style="position:absolute;left:443.5px;top:347.49px" width="8" height="7.2" viewBox="0 0 16 16" preserveAspectRatio="none"><path d="M0.5 0.5H12L15.5 4V15.5H0.5Z" fill="#f8f8f8" stroke="#d8d8d8" stroke-width="0.6"/><text x="8" y="13" font-family="Liberation Sans" font-size="11" fill="#9a9a9a" text-anchor="middle">a</text></svg>
<svg style="position:absolute;left:757.5px;top:343.70000000000005px;overflow:visible" width="6" height="6" viewBox="0 0 6 6"><circle cx="3" cy="3" r="2.75" fill="#fff" stroke="#a0a0a0" stroke-width="0.4"/></svg>
<div class="t" style="left:766.1px;top:343.00000000000006px;font-size:6.0px;line-height:8px;color:#001800;font-weight:normal;">Átutalás</div>
<svg style="position:absolute;left:757.5px;top:351.90000000000003px;overflow:visible" width="6" height="6" viewBox="0 0 6 6"><circle cx="3" cy="3" r="2.75" fill="#fff" stroke="#a0a0a0" stroke-width="0.4"/></svg>
<div class="t" style="left:766.1px;top:351.20000000000005px;font-size:6.0px;line-height:8px;color:#001800;font-weight:normal;">Készpénz</div>
<svg style="position:absolute;left:813.6px;top:343.70000000000005px;overflow:visible" width="6" height="6" viewBox="0 0 6 6"><circle cx="3" cy="3" r="2.75" fill="#fff" stroke="#a0a0a0" stroke-width="0.4"/></svg>
<div class="t" style="left:822.2px;top:343.00000000000006px;font-size:6.0px;line-height:8px;color:#001800;font-weight:normal;">Bankkártya</div>
<svg style="position:absolute;left:813.6px;top:351.90000000000003px;overflow:visible" width="6" height="6" viewBox="0 0 6 6"><circle cx="3" cy="3" r="2.75" fill="#fff" stroke="#a0a0a0" stroke-width="0.4"/><circle cx="3" cy="3" r="1.1" fill="#111"/></svg>
<div class="t" style="left:822.2px;top:351.20000000000005px;font-size:6.0px;line-height:8px;color:#001800;font-weight:normal;">Utánvét</div>
<svg style="position:absolute;left:869.6px;top:343.70000000000005px;overflow:visible" width="6" height="6" viewBox="0 0 6 6"><circle cx="3" cy="3" r="2.75" fill="#fff" stroke="#a0a0a0" stroke-width="0.4"/></svg>
<div class="t" style="left:878.2px;top:343.00000000000006px;font-size:6.0px;line-height:8px;color:#001800;font-weight:normal;">Csop.beszedés</div>
<div style="position:absolute;left:11.5px;top:359.38px;width:986.8px;height:0.7px;background:rgba(120,120,120,0.45)"></div>
<div style="position:absolute;left:11.5px;top:359.98px;width:986.8px;height:17.78px;background:#ffff00"></div>
<div style="position:absolute;left:5.4px;top:359.98px;width:6.1px;height:17.78px;background:#a9c8ee;border:0.6px solid #5f7fa8"></div>
<div class="t" style="left:13.1px;top:362.77px;font-size:6.0px;line-height:7.6px;color:#2a2a00;font-weight:normal;letter-spacing:0.05px">2021.11.29.</div>
<div class="t" style="left:13.1px;top:369.37px;font-size:6.0px;line-height:7.6px;color:#2a2a00;font-weight:normal;letter-spacing:0.05px">11:39:41</div>
<div class="t" style="left:65.1px;top:362.77px;font-size:6.0px;line-height:7.6px;color:#2a2a00;font-weight:normal;letter-spacing:0.05px">2022.05.18.</div>
<div class="t" style="left:65.1px;top:369.37px;font-size:6.0px;line-height:7.6px;color:#2a2a00;font-weight:normal;letter-spacing:0.05px">8:37:40</div>
<div class="t" style="left:118.7px;top:364.87px;font-size:6.0px;line-height:8px;color:#2a2a00;font-weight:normal;">Teszt Beszállító</div>
<div class="t" style="left:209.7px;top:364.87px;font-size:6.0px;line-height:8px;color:#2a2a00;font-weight:normal;">Árajánlatot kért</div>
<div class="t" style="left:263.2px;top:364.87px;font-size:6.0px;line-height:8px;color:#2a2a00;font-weight:normal;">teszt@tesztbesz.com</div>
<div class="t" style="left:335.2px;top:364.87px;font-size:6.0px;line-height:8px;color:#2a2a00;font-weight:normal;">+44 824 123</div>
<div class="t" style="left:468.2px;top:364.87px;font-size:6.0px;line-height:8px;color:#2a2a00;font-weight:normal;">Huszár Zoltán</div>
<div class="t" style="left:640.2px;top:364.87px;font-size:6.0px;line-height:8px;color:#2a2a00;font-weight:normal;">Internet</div>
<svg style="position:absolute;left:401px;top:365.27px" width="8" height="7.2" viewBox="0 0 16 16" preserveAspectRatio="none"><path d="M0.5 0.5H12L15.5 4V15.5H0.5Z" fill="#f8f8f8" stroke="#d8d8d8" stroke-width="0.6"/><text x="8" y="13" font-family="Liberation Sans" font-size="11" fill="#9a9a9a" text-anchor="middle">a</text></svg>
<svg style="position:absolute;left:443.5px;top:365.27px" width="8" height="7.2" viewBox="0 0 16 16" preserveAspectRatio="none"><path d="M0.5 0.5H12L15.5 4V15.5H0.5Z" fill="#f8f8f8" stroke="#d8d8d8" stroke-width="0.6"/><text x="8" y="13" font-family="Liberation Sans" font-size="11" fill="#9a9a9a" text-anchor="middle">a</text></svg>
<svg style="position:absolute;left:757.5px;top:361.48px;overflow:visible" width="6" height="6" viewBox="0 0 6 6"><circle cx="3" cy="3" r="2.75" fill="#fff" stroke="#a0a0a0" stroke-width="0.4"/></svg>
<div class="t" style="left:766.1px;top:360.78000000000003px;font-size:6.0px;line-height:8px;color:#2a2a00;font-weight:normal;">Átutalás</div>
<svg style="position:absolute;left:757.5px;top:369.68px;overflow:visible" width="6" height="6" viewBox="0 0 6 6"><circle cx="3" cy="3" r="2.75" fill="#fff" stroke="#a0a0a0" stroke-width="0.4"/></svg>
<div class="t" style="left:766.1px;top:368.98px;font-size:6.0px;line-height:8px;color:#2a2a00;font-weight:normal;">Készpénz</div>
<svg style="position:absolute;left:813.6px;top:361.48px;overflow:visible" width="6" height="6" viewBox="0 0 6 6"><circle cx="3" cy="3" r="2.75" fill="#fff" stroke="#a0a0a0" stroke-width="0.4"/></svg>
<div class="t" style="left:822.2px;top:360.78000000000003px;font-size:6.0px;line-height:8px;color:#2a2a00;font-weight:normal;">Bankkártya</div>
<svg style="position:absolute;left:813.6px;top:369.68px;overflow:visible" width="6" height="6" viewBox="0 0 6 6"><circle cx="3" cy="3" r="2.75" fill="#fff" stroke="#a0a0a0" stroke-width="0.4"/></svg>
<div class="t" style="left:822.2px;top:368.98px;font-size:6.0px;line-height:8px;color:#2a2a00;font-weight:normal;">Utánvét</div>
<svg style="position:absolute;left:869.6px;top:361.48px;overflow:visible" width="6" height="6" viewBox="0 0 6 6"><circle cx="3" cy="3" r="2.75" fill="#fff" stroke="#a0a0a0" stroke-width="0.4"/><circle cx="3" cy="3" r="1.1" fill="#111"/></svg>
<div class="t" style="left:878.2px;top:360.78000000000003px;font-size:6.0px;line-height:8px;color:#2a2a00;font-weight:normal;">Csop.beszedés</div>
<div style="position:absolute;left:11.5px;top:377.15999999999997px;width:986.8px;height:0.7px;background:rgba(120,120,120,0.45)"></div>
<div style="position:absolute;left:11.5px;top:377.76px;width:986.8px;height:17.78px;background:#d9f8b6"></div>
<div style="position:absolute;left:5.4px;top:377.76px;width:6.1px;height:17.78px;background:#a9c8ee;border:0.6px solid #5f7fa8"></div>
<div class="t" style="left:13.1px;top:380.54999999999995px;font-size:6.0px;line-height:7.6px;color:#202a18;font-weight:normal;letter-spacing:0.05px">2021.11.29.</div>
<div class="t" style="left:13.1px;top:387.15px;font-size:6.0px;line-height:7.6px;color:#202a18;font-weight:normal;letter-spacing:0.05px">11:39:41</div>
<div class="t" style="left:65.1px;top:380.54999999999995px;font-size:6.0px;line-height:7.6px;color:#202a18;font-weight:normal;letter-spacing:0.05px">2022.03.28.</div>
<div class="t" style="left:65.1px;top:387.15px;font-size:6.0px;line-height:7.6px;color:#202a18;font-weight:normal;letter-spacing:0.05px">10:02:20</div>
<div class="t" style="left:118.7px;top:382.65px;font-size:6.0px;line-height:8px;color:#202a18;font-weight:normal;">Teszt Vevő</div>
<div class="t" style="left:209.7px;top:382.65px;font-size:6.0px;line-height:8px;color:#202a18;font-weight:normal;">Nyitott</div>
<div class="t" style="left:468.2px;top:382.65px;font-size:6.0px;line-height:8px;color:#202a18;font-weight:normal;">Nagy Emese</div>
<div class="t" style="left:640.2px;top:382.65px;font-size:6.0px;line-height:8px;color:#202a18;font-weight:normal;">Internet</div>
<svg style="position:absolute;left:401px;top:383.04999999999995px" width="8" height="7.2" viewBox="0 0 16 16" preserveAspectRatio="none"><path d="M0.5 0.5H12L15.5 4V15.5H0.5Z" fill="#f8f8f8" stroke="#d8d8d8" stroke-width="0.6"/><text x="8" y="13" font-family="Liberation Sans" font-size="11" fill="#9a9a9a" text-anchor="middle">a</text></svg>
<svg style="position:absolute;left:443.5px;top:383.04999999999995px" width="8" height="7.2" viewBox="0 0 16 16" preserveAspectRatio="none"><path d="M0.5 0.5H12L15.5 4V15.5H0.5Z" fill="#f8f8f8" stroke="#d8d8d8" stroke-width="0.6"/><text x="8" y="13" font-family="Liberation Sans" font-size="11" fill="#9a9a9a" text-anchor="middle">a</text></svg>
<svg style="position:absolute;left:757.5px;top:379.26px;overflow:visible" width="6" height="6" viewBox="0 0 6 6"><circle cx="3" cy="3" r="2.75" fill="#fff" stroke="#a0a0a0" stroke-width="0.4"/><circle cx="3" cy="3" r="1.1" fill="#111"/></svg>
<div class="t" style="left:766.1px;top:378.56px;font-size:6.0px;line-height:8px;color:#202a18;font-weight:normal;">Átutalás</div>
<svg style="position:absolute;left:757.5px;top:387.46px;overflow:visible" width="6" height="6" viewBox="0 0 6 6"><circle cx="3" cy="3" r="2.75" fill="#fff" stroke="#a0a0a0" stroke-width="0.4"/></svg>
<div class="t" style="left:766.1px;top:386.76px;font-size:6.0px;line-height:8px;color:#202a18;font-weight:normal;">Készpénz</div>
<svg style="position:absolute;left:813.6px;top:379.26px;overflow:visible" width="6" height="6" viewBox="0 0 6 6"><circle cx="3" cy="3" r="2.75" fill="#fff" stroke="#a0a0a0" stroke-width="0.4"/></svg>
<div class="t" style="left:822.2px;top:378.56px;font-size:6.0px;line-height:8px;color:#202a18;font-weight:normal;">Bankkártya</div>
<svg style="position:absolute;left:813.6px;top:387.46px;overflow:visible" width="6" height="6" viewBox="0 0 6 6"><circle cx="3" cy="3" r="2.75" fill="#fff" stroke="#a0a0a0" stroke-width="0.4"/></svg>
<div class="t" style="left:822.2px;top:386.76px;font-size:6.0px;line-height:8px;color:#202a18;font-weight:normal;">Utánvét</div>
<svg style="position:absolute;left:869.6px;top:379.26px;overflow:visible" width="6" height="6" viewBox="0 0 6 6"><circle cx="3" cy="3" r="2.75" fill="#fff" stroke="#a0a0a0" stroke-width="0.4"/></svg>
<div class="t" style="left:878.2px;top:378.56px;font-size:6.0px;line-height:8px;color:#202a18;font-weight:normal;">Csop.beszedés</div>
<div style="position:absolute;left:11.5px;top:394.93999999999994px;width:986.8px;height:0.7px;background:rgba(120,120,120,0.45)"></div>
<div style="position:absolute;left:11.5px;top:395.54px;width:986.8px;height:17.78px;background:#008000"></div>
<div style="position:absolute;left:5.4px;top:395.54px;width:6.1px;height:17.78px;background:#a9c8ee;border:0.6px solid #5f7fa8"></div>
<div class="t" style="left:13.1px;top:398.33px;font-size:6.0px;line-height:7.6px;color:#001800;font-weight:normal;letter-spacing:0.05px">2022.04.06.</div>
<div class="t" style="left:13.1px;top:404.93px;font-size:6.0px;line-height:7.6px;color:#001800;font-weight:normal;letter-spacing:0.05px">15:57:00</div>
<div class="t" style="left:65.1px;top:398.33px;font-size:6.0px;line-height:7.6px;color:#001800;font-weight:normal;letter-spacing:0.05px">2022.05.18.</div>
<div class="t" style="left:65.1px;top:404.93px;font-size:6.0px;line-height:7.6px;color:#001800;font-weight:normal;letter-spacing:0.05px">8:37:42</div>
<div class="t" style="left:118.7px;top:400.43px;font-size:6.0px;line-height:8px;color:#001800;font-weight:normal;">Tf-es Tihamér</div>
<div class="t" style="left:209.7px;top:400.43px;font-size:6.0px;line-height:8px;color:#001800;font-weight:normal;">Telefonon keresett</div>
<div class="t" style="left:468.2px;top:400.43px;font-size:6.0px;line-height:8px;color:#001800;font-weight:normal;">Nagy Emese</div>
<div class="t" style="left:640.2px;top:400.43px;font-size:6.0px;line-height:8px;color:#001800;font-weight:normal;">Ismerős</div>
<svg style="position:absolute;left:401px;top:400.83px" width="8" height="7.2" viewBox="0 0 16 16" preserveAspectRatio="none"><path d="M0.5 0.5H12L15.5 4V15.5H0.5Z" fill="#f6f8fc" stroke="#9ab" stroke-width="0.6"/><text x="8" y="13.5" font-family="Liberation Sans" font-weight="bold" font-size="12" fill="#3a70b8" text-anchor="middle">A</text></svg>
<svg style="position:absolute;left:443.5px;top:400.83px" width="8" height="7.2" viewBox="0 0 16 16" preserveAspectRatio="none"><path d="M0.5 0.5H12L15.5 4V15.5H0.5Z" fill="#f8f8f8" stroke="#d8d8d8" stroke-width="0.6"/><text x="8" y="13" font-family="Liberation Sans" font-size="11" fill="#9a9a9a" text-anchor="middle">a</text></svg>
<svg style="position:absolute;left:757.5px;top:397.04px;overflow:visible" width="6" height="6" viewBox="0 0 6 6"><circle cx="3" cy="3" r="2.75" fill="#fff" stroke="#a0a0a0" stroke-width="0.4"/></svg>
<div class="t" style="left:766.1px;top:396.34000000000003px;font-size:6.0px;line-height:8px;color:#001800;font-weight:normal;">Átutalás</div>
<svg style="position:absolute;left:757.5px;top:405.24px;overflow:visible" width="6" height="6" viewBox="0 0 6 6"><circle cx="3" cy="3" r="2.75" fill="#fff" stroke="#a0a0a0" stroke-width="0.4"/></svg>
<div class="t" style="left:766.1px;top:404.54px;font-size:6.0px;line-height:8px;color:#001800;font-weight:normal;">Készpénz</div>
<svg style="position:absolute;left:813.6px;top:397.04px;overflow:visible" width="6" height="6" viewBox="0 0 6 6"><circle cx="3" cy="3" r="2.75" fill="#fff" stroke="#a0a0a0" stroke-width="0.4"/><circle cx="3" cy="3" r="1.1" fill="#111"/></svg>
<div class="t" style="left:822.2px;top:396.34000000000003px;font-size:6.0px;line-height:8px;color:#001800;font-weight:normal;">Bankkártya</div>
<svg style="position:absolute;left:813.6px;top:405.24px;overflow:visible" width="6" height="6" viewBox="0 0 6 6"><circle cx="3" cy="3" r="2.75" fill="#fff" stroke="#a0a0a0" stroke-width="0.4"/></svg>
<div class="t" style="left:822.2px;top:404.54px;font-size:6.0px;line-height:8px;color:#001800;font-weight:normal;">Utánvét</div>
<svg style="position:absolute;left:869.6px;top:397.04px;overflow:visible" width="6" height="6" viewBox="0 0 6 6"><circle cx="3" cy="3" r="2.75" fill="#fff" stroke="#a0a0a0" stroke-width="0.4"/></svg>
<div class="t" style="left:878.2px;top:396.34000000000003px;font-size:6.0px;line-height:8px;color:#001800;font-weight:normal;">Csop.beszedés</div>
<div style="position:absolute;left:11.5px;top:412.72px;width:986.8px;height:0.7px;background:rgba(120,120,120,0.45)"></div>
<div style="position:absolute;left:11.5px;top:413.32000000000005px;width:986.8px;height:17.78px;background:#c0c0c0"></div>
<div style="position:absolute;left:5.4px;top:413.32000000000005px;width:6.1px;height:17.78px;background:#a9c8ee;border:0.6px solid #5f7fa8"></div>
<div class="t" style="left:13.1px;top:416.11px;font-size:6.0px;line-height:7.6px;color:#2a2a2a;font-weight:normal;letter-spacing:0.05px">2022.04.06.</div>
<div class="t" style="left:13.1px;top:422.71000000000004px;font-size:6.0px;line-height:7.6px;color:#2a2a2a;font-weight:normal;letter-spacing:0.05px">15:54:23</div>
<div class="t" style="left:65.1px;top:416.11px;font-size:6.0px;line-height:7.6px;color:#2a2a2a;font-weight:normal;letter-spacing:0.05px">2022.05.18.</div>
<div class="t" style="left:65.1px;top:422.71000000000004px;font-size:6.0px;line-height:7.6px;color:#2a2a2a;font-weight:normal;letter-spacing:0.05px">8:31:22</div>
<div class="t" style="left:118.7px;top:418.21000000000004px;font-size:6.0px;line-height:8px;color:#2a2a2a;font-weight:normal;">Tk-s Tibi</div>
<div class="t" style="left:209.7px;top:418.21000000000004px;font-size:6.0px;line-height:8px;color:#2a2a2a;font-weight:normal;">Lezárt</div>
<div class="t" style="left:468.2px;top:418.21000000000004px;font-size:6.0px;line-height:8px;color:#2a2a2a;font-weight:normal;">Kovács István</div>
<div class="t" style="left:640.2px;top:418.21000000000004px;font-size:6.0px;line-height:8px;color:#2a2a2a;font-weight:normal;">Internet</div>
<svg style="position:absolute;left:401px;top:418.61px" width="8" height="7.2" viewBox="0 0 16 16" preserveAspectRatio="none"><path d="M0.5 0.5H12L15.5 4V15.5H0.5Z" fill="#f6f8fc" stroke="#9ab" stroke-width="0.6"/><text x="8" y="13.5" font-family="Liberation Sans" font-weight="bold" font-size="12" fill="#3a70b8" text-anchor="middle">A</text></svg>
<svg style="position:absolute;left:443.5px;top:418.61px" width="8" height="7.2" viewBox="0 0 16 16" preserveAspectRatio="none"><path d="M0.5 0.5H12L15.5 4V15.5H0.5Z" fill="#f8f8f8" stroke="#d8d8d8" stroke-width="0.6"/><text x="8" y="13" font-family="Liberation Sans" font-size="11" fill="#9a9a9a" text-anchor="middle">a</text></svg>
<svg style="position:absolute;left:757.5px;top:414.82000000000005px;overflow:visible" width="6" height="6" viewBox="0 0 6 6"><circle cx="3" cy="3" r="2.75" fill="#fff" stroke="#a0a0a0" stroke-width="0.4"/><circle cx="3" cy="3" r="1.1" fill="#111"/></svg>
<div class="t" style="left:766.1px;top:414.12000000000006px;font-size:6.0px;line-height:8px;color:#2a2a2a;font-weight:normal;">Átutalás</div>
<svg style="position:absolute;left:757.5px;top:423.02000000000004px;overflow:visible" width="6" height="6" viewBox="0 0 6 6"><circle cx="3" cy="3" r="2.75" fill="#fff" stroke="#a0a0a0" stroke-width="0.4"/></svg>
<div class="t" style="left:766.1px;top:422.32000000000005px;font-size:6.0px;line-height:8px;color:#2a2a2a;font-weight:normal;">Készpénz</div>
<svg style="position:absolute;left:813.6px;top:414.82000000000005px;overflow:visible" width="6" height="6" viewBox="0 0 6 6"><circle cx="3" cy="3" r="2.75" fill="#fff" stroke="#a0a0a0" stroke-width="0.4"/></svg>
<div class="t" style="left:822.2px;top:414.12000000000006px;font-size:6.0px;line-height:8px;color:#2a2a2a;font-weight:normal;">Bankkártya</div>
<svg style="position:absolute;left:813.6px;top:423.02000000000004px;overflow:visible" width="6" height="6" viewBox="0 0 6 6"><circle cx="3" cy="3" r="2.75" fill="#fff" stroke="#a0a0a0" stroke-width="0.4"/></svg>
<div class="t" style="left:822.2px;top:422.32000000000005px;font-size:6.0px;line-height:8px;color:#2a2a2a;font-weight:normal;">Utánvét</div>
<svg style="position:absolute;left:869.6px;top:414.82000000000005px;overflow:visible" width="6" height="6" viewBox="0 0 6 6"><circle cx="3" cy="3" r="2.75" fill="#fff" stroke="#a0a0a0" stroke-width="0.4"/></svg>
<div class="t" style="left:878.2px;top:414.12000000000006px;font-size:6.0px;line-height:8px;color:#2a2a2a;font-weight:normal;">Csop.beszedés</div>
<div style="position:absolute;left:11.5px;top:430.5px;width:986.8px;height:0.7px;background:rgba(120,120,120,0.45)"></div>
<div style="position:absolute;left:11.5px;top:431.1px;width:986.8px;height:17.78px;background:#000000"></div>
<div style="position:absolute;left:5.4px;top:431.1px;width:6.1px;height:17.78px;background:#a9c8ee;border:0.6px solid #5f7fa8"></div>
<div class="t" style="left:13.1px;top:433.89px;font-size:6.0px;line-height:7.6px;color:#00e000;font-weight:normal;letter-spacing:0.05px">2022.04.06.</div>
<div class="t" style="left:13.1px;top:440.49px;font-size:6.0px;line-height:7.6px;color:#00e000;font-weight:normal;letter-spacing:0.05px">15:51:42</div>
<div class="t" style="left:65.1px;top:433.89px;font-size:6.0px;line-height:7.6px;color:#00e000;font-weight:normal;letter-spacing:0.05px">2022.05.18.</div>
<div class="t" style="left:65.1px;top:440.49px;font-size:6.0px;line-height:7.6px;color:#00e000;font-weight:normal;letter-spacing:0.05px">8:37:45</div>
<div class="t" style="left:118.7px;top:435.99px;font-size:6.0px;line-height:8px;color:#00e000;font-weight:normal;">Végfelhasználós Viola</div>
<div class="t" style="left:209.7px;top:435.99px;font-size:6.0px;line-height:8px;color:#00e000;font-weight:normal;">Fontos</div>
<div class="t" style="left:468.2px;top:435.99px;font-size:6.0px;line-height:8px;color:#00e000;font-weight:normal;">Nagy Emese</div>
<div style="position:absolute;left:639px;top:431.1px;width:63.39999999999998px;height:17.78px;background:#8080ff"></div>
<div class="t" style="left:640.2px;top:435.99px;font-size:6.0px;line-height:8px;color:#10104a;font-weight:normal;">Rádió</div>
<svg style="position:absolute;left:401px;top:436.39px" width="8" height="7.2" viewBox="0 0 16 16" preserveAspectRatio="none"><path d="M0.5 0.5H12L15.5 4V15.5H0.5Z" fill="#f8f8f8" stroke="#d8d8d8" stroke-width="0.6"/><text x="8" y="13" font-family="Liberation Sans" font-size="11" fill="#9a9a9a" text-anchor="middle">a</text></svg>
<svg style="position:absolute;left:443.5px;top:436.39px" width="8" height="7.2" viewBox="0 0 16 16" preserveAspectRatio="none"><path d="M0.5 0.5H12L15.5 4V15.5H0.5Z" fill="#f8f8f8" stroke="#d8d8d8" stroke-width="0.6"/><text x="8" y="13" font-family="Liberation Sans" font-size="11" fill="#9a9a9a" text-anchor="middle">a</text></svg>
<svg style="position:absolute;left:757.5px;top:432.6px;overflow:visible" width="6" height="6" viewBox="0 0 6 6"><circle cx="3" cy="3" r="2.75" fill="#fff" stroke="#a0a0a0" stroke-width="0.4"/></svg>
<div class="t" style="left:766.1px;top:431.90000000000003px;font-size:6.0px;line-height:8px;color:#00e000;font-weight:normal;">Átutalás</div>
<svg style="position:absolute;left:757.5px;top:440.8px;overflow:visible" width="6" height="6" viewBox="0 0 6 6"><circle cx="3" cy="3" r="2.75" fill="#fff" stroke="#a0a0a0" stroke-width="0.4"/></svg>
<div class="t" style="left:766.1px;top:440.1px;font-size:6.0px;line-height:8px;color:#00e000;font-weight:normal;">Készpénz</div>
<svg style="position:absolute;left:813.6px;top:432.6px;overflow:visible" width="6" height="6" viewBox="0 0 6 6"><circle cx="3" cy="3" r="2.75" fill="#fff" stroke="#a0a0a0" stroke-width="0.4"/><circle cx="3" cy="3" r="1.1" fill="#111"/></svg>
<div class="t" style="left:822.2px;top:431.90000000000003px;font-size:6.0px;line-height:8px;color:#00e000;font-weight:normal;">Bankkártya</div>
<svg style="position:absolute;left:813.6px;top:440.8px;overflow:visible" width="6" height="6" viewBox="0 0 6 6"><circle cx="3" cy="3" r="2.75" fill="#fff" stroke="#a0a0a0" stroke-width="0.4"/></svg>
<div class="t" style="left:822.2px;top:440.1px;font-size:6.0px;line-height:8px;color:#00e000;font-weight:normal;">Utánvét</div>
<svg style="position:absolute;left:869.6px;top:432.6px;overflow:visible" width="6" height="6" viewBox="0 0 6 6"><circle cx="3" cy="3" r="2.75" fill="#fff" stroke="#a0a0a0" stroke-width="0.4"/></svg>
<div class="t" style="left:878.2px;top:431.90000000000003px;font-size:6.0px;line-height:8px;color:#00e000;font-weight:normal;">Csop.beszedés</div>
<div style="position:absolute;left:11.5px;top:448.28px;width:986.8px;height:0.7px;background:rgba(120,120,120,0.45)"></div>
<div style="position:absolute;left:63.1px;top:253.3px;width:0.8px;height:195.57999999999998px;background:rgba(120,120,120,0.4)"></div>
<div style="position:absolute;left:63.0px;top:235.5px;width:1px;height:17.80000000000001px;background:#2e4266"></div>
<div style="position:absolute;left:117.1px;top:253.3px;width:0.8px;height:195.57999999999998px;background:rgba(120,120,120,0.4)"></div>
<div style="position:absolute;left:117.0px;top:235.5px;width:1px;height:17.80000000000001px;background:#2e4266"></div>
<div style="position:absolute;left:208.1px;top:253.3px;width:0.8px;height:195.57999999999998px;background:rgba(120,120,120,0.4)"></div>
<div style="position:absolute;left:208.0px;top:235.5px;width:1px;height:17.80000000000001px;background:#2e4266"></div>
<div style="position:absolute;left:261.6px;top:253.3px;width:0.8px;height:195.57999999999998px;background:rgba(120,120,120,0.4)"></div>
<div style="position:absolute;left:261.5px;top:235.5px;width:1px;height:17.80000000000001px;background:#2e4266"></div>
<div style="position:absolute;left:333.6px;top:253.3px;width:0.8px;height:195.57999999999998px;background:rgba(120,120,120,0.4)"></div>
<div style="position:absolute;left:333.5px;top:235.5px;width:1px;height:17.80000000000001px;background:#2e4266"></div>
<div style="position:absolute;left:380.6px;top:253.3px;width:0.8px;height:195.57999999999998px;background:rgba(120,120,120,0.4)"></div>
<div style="position:absolute;left:380.5px;top:235.5px;width:1px;height:17.80000000000001px;background:#2e4266"></div>
<div style="position:absolute;left:427.90000000000003px;top:253.3px;width:0.8px;height:195.57999999999998px;background:rgba(120,120,120,0.4)"></div>
<div style="position:absolute;left:427.8px;top:235.5px;width:1px;height:17.80000000000001px;background:#2e4266"></div>
<div style="position:absolute;left:466.6px;top:253.3px;width:0.8px;height:195.57999999999998px;background:rgba(120,120,120,0.4)"></div>
<div style="position:absolute;left:466.5px;top:235.5px;width:1px;height:17.80000000000001px;background:#2e4266"></div>
<div style="position:absolute;left:523.2px;top:253.3px;width:0.8px;height:195.57999999999998px;background:rgba(120,120,120,0.4)"></div>
<div style="position:absolute;left:523.1px;top:235.5px;width:1px;height:17.80000000000001px;background:#2e4266"></div>
<div style="position:absolute;left:575.0px;top:253.3px;width:0.8px;height:195.57999999999998px;background:rgba(120,120,120,0.4)"></div>
<div style="position:absolute;left:574.9px;top:235.5px;width:1px;height:17.80000000000001px;background:#2e4266"></div>
<div style="position:absolute;left:638.6px;top:253.3px;width:0.8px;height:195.57999999999998px;background:rgba(120,120,120,0.4)"></div>
<div style="position:absolute;left:638.5px;top:235.5px;width:1px;height:17.80000000000001px;background:#2e4266"></div>
<div style="position:absolute;left:702.0px;top:253.3px;width:0.8px;height:195.57999999999998px;background:rgba(120,120,120,0.4)"></div>
<div style="position:absolute;left:701.9px;top:235.5px;width:1px;height:17.80000000000001px;background:#2e4266"></div>
<div style="position:absolute;left:755.5px;top:253.3px;width:0.8px;height:195.57999999999998px;background:rgba(120,120,120,0.4)"></div>
<div style="position:absolute;left:755.4px;top:235.5px;width:1px;height:17.80000000000001px;background:#2e4266"></div>
<div style="position:absolute;left:926.1px;top:253.3px;width:0.8px;height:195.57999999999998px;background:rgba(120,120,120,0.4)"></div>
<div style="position:absolute;left:926.0px;top:235.5px;width:1px;height:17.80000000000001px;background:#2e4266"></div>
<div style="position:absolute;left:380.4px;top:225.6px;width:1.3px;height:223.28px;background:#111"></div>
<div style="position:absolute;left:997.6px;top:225.6px;width:0.9px;height:27.700000000000017px;background:#22304a"></div>
<div style="position:absolute;left:11.2px;top:225.6px;width:0.8px;height:223.28px;background:#2e4266"></div>
<div style="position:absolute;left:5.2px;top:448.28px;width:993.1px;height:0.9px;background:#555"></div>
<div style="position:absolute;left:5.2px;top:225.3px;width:0.8px;height:223.57999999999998px;background:#555"></div>
<svg style="position:absolute;left:7px;top:437.49px;overflow:visible" width="3" height="5" viewBox="0 0 3 5"><path d="M0.3 0.3L2.8 2.5L0.3 4.7Z" fill="none" stroke="#333" stroke-width="0.6"/></svg>
<div style="position:absolute;left:5.2px;top:515.6px;width:993.1px;height:13.8px;background:#fffde0;border-top:0.8px solid #a0a0a0;border-left:0.9px solid #8a8a8a;border-bottom:0.9px solid #8a8a8a"></div>
<div style="position:absolute;left:6.1px;top:516.4px;width:5.9px;height:12.1px;background:#a4c4ea"></div>
<div style="position:absolute;left:119.3px;top:517.5px;width:88.2px;height:10.5px;background:#fffde0;border:0.7px solid #b8b8b0"></div>
<div class="t" style="left:121px;top:519.0px;font-size:6.4px;line-height:8px;color:#1e2a7a;font-weight:bold;">11</div>
<div style="position:absolute;left:0px;top:529.5px;width:1024px;height:5.5px;background:#f0f0f0"></div>
<div style="position:absolute;left:0px;top:535px;width:1024px;height:11.6px;background:linear-gradient(#dce7f6,#c6daf3 50%,#d4e3f6);border-top:0.8px solid #8fa8c8;border-bottom:0.8px solid #8fa8c8"></div>
<div style="position:absolute;left:0px;top:546.6px;width:1024px;height:9.4px;background:linear-gradient(#dce7f6,#c6daf3 60%,#d4e3f6);border-top:0.6px solid #8fa8c8"></div>
<div class="t" style="left:1px;top:537.0px;font-size:5.6px;line-height:8px;color:#b4c0d0;font-weight:normal;">CAPS</div>
<div class="t" style="left:19.5px;top:537.0px;font-size:5.6px;line-height:8px;color:#2b4a86;font-weight:normal;">NUM</div>
<div class="t" style="left:36px;top:537.0px;font-size:5.6px;line-height:8px;color:#b4c0d0;font-weight:normal;">SCRL</div>
<div class="t" style="left:56px;top:537.0px;font-size:5.6px;line-height:8px;color:#b4c0d0;font-weight:normal;">INS</div>
<div style="position:absolute;left:69.5px;top:536px;width:0.8px;height:10px;background:#94aacb"></div>
<div style="position:absolute;left:86.5px;top:536px;width:0.8px;height:10px;background:#94aacb"></div>
<div style="position:absolute;left:143.5px;top:536px;width:0.8px;height:10px;background:#94aacb"></div>
<div style="position:absolute;left:72px;top:539px;width:9.5px;height:3.8px;background:linear-gradient(#5fe05f,#0aa80a);border:0.5px solid #08700a"></div>
<div style="position:absolute;left:1014px;top:535.5px;width:10px;height:10.8px;background:linear-gradient(#c4d6ee,#a9c2e2)"></div>
<div style="position:absolute;left:1014px;top:547px;width:10px;height:9px;background:linear-gradient(#c4d6ee,#a9c2e2)"></div>
<svg style="position:absolute;left:1016.5px;top:538px;overflow:visible" width="6" height="7" viewBox="0 0 6 7"><g fill="#4a5a78"><rect x="4.5" y="1" width="1" height="1"/><rect x="4.5" y="3" width="1" height="1"/><rect x="4.5" y="5" width="1" height="1"/><rect x="2.5" y="3" width="1" height="1"/><rect x="2.5" y="5" width="1" height="1"/><rect x="0.5" y="5" width="1" height="1"/></g></svg>
<svg style="position:absolute;left:1016.5px;top:549px;overflow:visible" width="6" height="7" viewBox="0 0 6 7"><g fill="#4a5a78"><rect x="4.5" y="1" width="1" height="1"/><rect x="4.5" y="3" width="1" height="1"/><rect x="4.5" y="5" width="1" height="1"/><rect x="2.5" y="3" width="1" height="1"/><rect x="2.5" y="5" width="1" height="1"/><rect x="0.5" y="5" width="1" height="1"/></g></svg>
</body></html>
